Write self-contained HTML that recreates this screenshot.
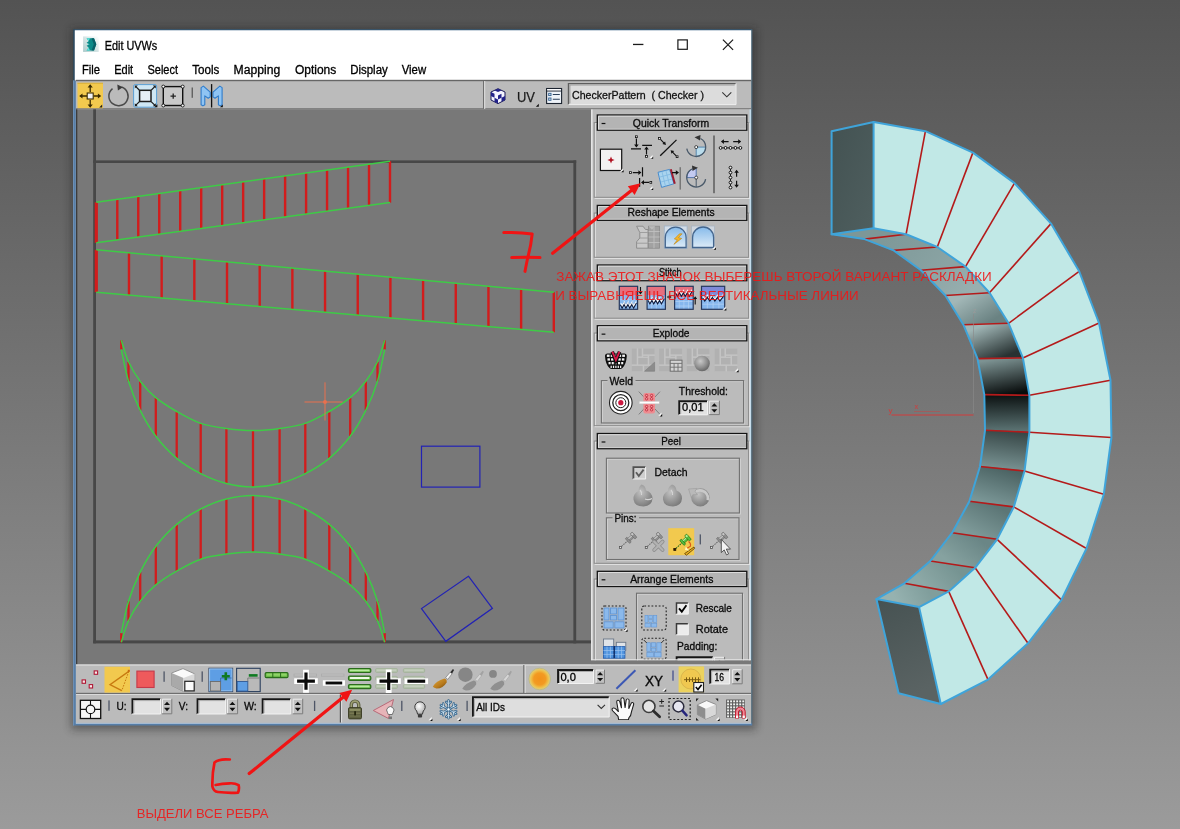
<!DOCTYPE html>
<html lang="ru">
<head>
<meta charset="utf-8">
<title>Edit UVWs</title>
<style>
html,body{margin:0;padding:0;background:#777;}
body{width:1180px;height:829px;overflow:hidden;font-family:"Liberation Sans", Arial, sans-serif;}
svg{display:block;will-change:transform;}
svg text{font-family:"Liberation Sans", Arial, sans-serif;white-space:pre;}
</style>
</head>
<body>
<svg width="1180" height="829" viewBox="0 0 1180 829">
<defs>
<linearGradient id="bg" x1="0" y1="0" x2="0" y2="1"><stop offset="0" stop-color="#535353"/><stop offset="1" stop-color="#9b9b9b"/></linearGradient>
<filter id="sh" x="-5%" y="-5%" width="110%" height="110%"><feGaussianBlur stdDeviation="4"/></filter>
<filter id="b1"><feGaussianBlur stdDeviation="0.45"/></filter>
</defs>
<rect x="0" y="0" width="1180" height="829" fill="url(#bg)"/>
<g id="arc3d">
<defs>
<linearGradient id="w0" gradientUnits="userSpaceOnUse" x1="852.6" y1="231.2" x2="885.35" y2="236.65"><stop offset="0" stop-color="#7d9797"/><stop offset="1" stop-color="#7d9797"/></linearGradient>
<linearGradient id="w1" gradientUnits="userSpaceOnUse" x1="885.35" y1="236.65" x2="915.45" y2="248.7"><stop offset="0" stop-color="#7f9999"/><stop offset="1" stop-color="#829c9c"/></linearGradient>
<linearGradient id="w2" gradientUnits="userSpaceOnUse" x1="915.45" y1="248.7" x2="943.25" y2="268.45"><stop offset="0" stop-color="#849e9e"/><stop offset="1" stop-color="#8aa3a3"/></linearGradient>
<linearGradient id="w3" gradientUnits="userSpaceOnUse" x1="943.25" y1="268.45" x2="967.45" y2="294.1"><stop offset="0" stop-color="#8ea6a6"/><stop offset="1" stop-color="#98afaf"/></linearGradient>
<linearGradient id="w4" gradientUnits="userSpaceOnUse" x1="967.45" y1="294.1" x2="986" y2="324"><stop offset="0" stop-color="#a2b7b7"/><stop offset="1" stop-color="#6a8282"/></linearGradient>
<linearGradient id="w5" gradientUnits="userSpaceOnUse" x1="986" y1="324" x2="1000.2" y2="358.25"><stop offset="0" stop-color="#a0b6b6"/><stop offset="1" stop-color="#283232"/></linearGradient>
<linearGradient id="w6" gradientUnits="userSpaceOnUse" x1="1000.2" y1="358.25" x2="1006.85" y2="394.95"><stop offset="0" stop-color="#7c9292"/><stop offset="1" stop-color="#080c0c"/></linearGradient>
<linearGradient id="w7" gradientUnits="userSpaceOnUse" x1="1006.85" y1="394.95" x2="1007.2" y2="431.25"><stop offset="0" stop-color="#0c1212"/><stop offset="1" stop-color="#5c7474"/></linearGradient>
<linearGradient id="w8" gradientUnits="userSpaceOnUse" x1="1007.2" y1="431.25" x2="1002.25" y2="468.75"><stop offset="0" stop-color="#384848"/><stop offset="1" stop-color="#789292"/></linearGradient>
<linearGradient id="w9" gradientUnits="userSpaceOnUse" x1="1002.25" y1="468.75" x2="991.6" y2="504.1"><stop offset="0" stop-color="#4c6464"/><stop offset="1" stop-color="#7a9696"/></linearGradient>
<linearGradient id="w10" gradientUnits="userSpaceOnUse" x1="991.6" y1="504.1" x2="974.65" y2="536"><stop offset="0" stop-color="#5c7676"/><stop offset="1" stop-color="#7e9a99"/></linearGradient>
<linearGradient id="w11" gradientUnits="userSpaceOnUse" x1="974.65" y1="536" x2="952.7" y2="564.4"><stop offset="0" stop-color="#6a8686"/><stop offset="1" stop-color="#86a2a0"/></linearGradient>
<linearGradient id="w12" gradientUnits="userSpaceOnUse" x1="952.7" y1="564.4" x2="926.55" y2="587.35"><stop offset="0" stop-color="#769492"/><stop offset="1" stop-color="#8ca8a6"/></linearGradient>
<linearGradient id="w13" gradientUnits="userSpaceOnUse" x1="926.55" y1="587.35" x2="897.75" y2="603.1"><stop offset="0" stop-color="#809e9c"/><stop offset="1" stop-color="#96b2b0"/></linearGradient>
<linearGradient id="capt" x1="0" y1="0" x2="1" y2="1"><stop offset="0" stop-color="#435252"/><stop offset="1" stop-color="#4f5f5f"/></linearGradient>
<linearGradient id="capb" x1="0" y1="0" x2="0.3" y2="1"><stop offset="0" stop-color="#465252"/><stop offset="1" stop-color="#5a6363"/></linearGradient>
</defs>
<polygon points="873.6,228.2 906.1,234.2 864.6,239.1 831.6,234.2" fill="url(#w0)" stroke="url(#w0)" stroke-width="0.6"/>
<polygon points="906.1,234.2 937.3,247 893.6,250.4 864.6,239.1" fill="url(#w1)" stroke="url(#w1)" stroke-width="0.6"/>
<polygon points="937.3,247 965.5,266.6 921,270.3 893.6,250.4" fill="url(#w2)" stroke="url(#w2)" stroke-width="0.6"/>
<polygon points="965.5,266.6 989.5,292.7 945.4,295.5 921,270.3" fill="url(#w3)" stroke="url(#w3)" stroke-width="0.6"/>
<polygon points="989.5,292.7 1008.6,323.3 963.4,324.7 945.4,295.5" fill="url(#w4)" stroke="url(#w4)" stroke-width="0.6"/>
<polygon points="1008.6,323.3 1022.9,357.9 977.5,358.6 963.4,324.7" fill="url(#w5)" stroke="url(#w5)" stroke-width="0.6"/>
<polygon points="1022.9,357.9 1029.4,395.3 984.3,394.6 977.5,358.6" fill="url(#w6)" stroke="url(#w6)" stroke-width="0.6"/>
<polygon points="1029.4,395.3 1029.4,432.2 985,430.3 984.3,394.6" fill="url(#w7)" stroke="url(#w7)" stroke-width="0.6"/>
<polygon points="1029.4,432.2 1024.5,471 980,466.5 985,430.3" fill="url(#w8)" stroke="url(#w8)" stroke-width="0.6"/>
<polygon points="1024.5,471 1013.8,506.9 969.4,501.3 980,466.5" fill="url(#w9)" stroke="url(#w9)" stroke-width="0.6"/>
<polygon points="1013.8,506.9 997.1,539.3 952.2,532.7 969.4,501.3" fill="url(#w10)" stroke="url(#w10)" stroke-width="0.6"/>
<polygon points="997.1,539.3 975.1,567.8 930.3,561 952.2,532.7" fill="url(#w11)" stroke="url(#w11)" stroke-width="0.6"/>
<polygon points="975.1,567.8 948.7,591.4 904.4,583.3 930.3,561" fill="url(#w12)" stroke="url(#w12)" stroke-width="0.6"/>
<polygon points="948.7,591.4 919.1,607.1 876.4,599.1 904.4,583.3" fill="url(#w13)" stroke="url(#w13)" stroke-width="0.6"/>
<polygon points="873.6,122.1 925.4,131.2 972.9,152.6 1014.5,183.1 1051,223.6 1079.2,271.3 1099,323 1110.5,380.3 1111.4,437.5 1103.8,494.3 1086.5,548.5 1061.5,599.8 1028,643.3 988,679.6 940.8,704 919.1,607.1 948.7,591.4 975.1,567.8 997.1,539.3 1013.8,506.9 1024.5,471 1029.4,432.2 1029.4,395.3 1022.9,357.9 1008.6,323.3 989.5,292.7 965.5,266.6 937.3,247 906.1,234.2 873.6,228.2" fill="#c1e8e6"/>
<polygon points="831.6,131.2 873.6,122.1 873.6,228.2 831.6,234.2" fill="url(#capt)"/>
<polygon points="876.4,599.1 919.1,607.1 940.8,704 898.6,693.2" fill="url(#capb)"/>
<line x1="925.4" y1="131.2" x2="906.1" y2="234.2" stroke="#b41a1a" stroke-width="1.600"/>
<line x1="906.1" y1="234.2" x2="864.6" y2="239.1" stroke="#b41a1a" stroke-width="1.600"/>
<line x1="972.9" y1="152.6" x2="937.3" y2="247" stroke="#b41a1a" stroke-width="1.600"/>
<line x1="937.3" y1="247" x2="893.6" y2="250.4" stroke="#b41a1a" stroke-width="1.600"/>
<line x1="1014.5" y1="183.1" x2="965.5" y2="266.6" stroke="#b41a1a" stroke-width="1.600"/>
<line x1="965.5" y1="266.6" x2="921" y2="270.3" stroke="#b41a1a" stroke-width="1.600"/>
<line x1="1051" y1="223.6" x2="989.5" y2="292.7" stroke="#b41a1a" stroke-width="1.600"/>
<line x1="989.5" y1="292.7" x2="945.4" y2="295.5" stroke="#b41a1a" stroke-width="1.600"/>
<line x1="1079.2" y1="271.3" x2="1008.6" y2="323.3" stroke="#b41a1a" stroke-width="1.600"/>
<line x1="1008.6" y1="323.3" x2="963.4" y2="324.7" stroke="#b41a1a" stroke-width="1.600"/>
<line x1="1099" y1="323" x2="1022.9" y2="357.9" stroke="#b41a1a" stroke-width="1.600"/>
<line x1="1022.9" y1="357.9" x2="977.5" y2="358.6" stroke="#b41a1a" stroke-width="1.600"/>
<line x1="1110.5" y1="380.3" x2="1029.4" y2="395.3" stroke="#b41a1a" stroke-width="1.600"/>
<line x1="1029.4" y1="395.3" x2="984.3" y2="394.6" stroke="#b41a1a" stroke-width="1.600"/>
<line x1="1111.4" y1="437.5" x2="1029.4" y2="432.2" stroke="#b41a1a" stroke-width="1.600"/>
<line x1="1029.4" y1="432.2" x2="985" y2="430.3" stroke="#b41a1a" stroke-width="1.600"/>
<line x1="1103.8" y1="494.3" x2="1024.5" y2="471" stroke="#b41a1a" stroke-width="1.600"/>
<line x1="1024.5" y1="471" x2="980" y2="466.5" stroke="#b41a1a" stroke-width="1.600"/>
<line x1="1086.5" y1="548.5" x2="1013.8" y2="506.9" stroke="#b41a1a" stroke-width="1.600"/>
<line x1="1013.8" y1="506.9" x2="969.4" y2="501.3" stroke="#b41a1a" stroke-width="1.600"/>
<line x1="1061.5" y1="599.8" x2="997.1" y2="539.3" stroke="#b41a1a" stroke-width="1.600"/>
<line x1="997.1" y1="539.3" x2="952.2" y2="532.7" stroke="#b41a1a" stroke-width="1.600"/>
<line x1="1028" y1="643.3" x2="975.1" y2="567.8" stroke="#b41a1a" stroke-width="1.600"/>
<line x1="975.1" y1="567.8" x2="930.3" y2="561" stroke="#b41a1a" stroke-width="1.600"/>
<line x1="988" y1="679.6" x2="948.7" y2="591.4" stroke="#b41a1a" stroke-width="1.600"/>
<line x1="948.7" y1="591.4" x2="904.4" y2="583.3" stroke="#b41a1a" stroke-width="1.600"/>
<polyline points="873.6,122.1 925.4,131.2 972.9,152.6 1014.5,183.1 1051,223.6 1079.2,271.3 1099,323 1110.5,380.3 1111.4,437.5 1103.8,494.3 1086.5,548.5 1061.5,599.8 1028,643.3 988,679.6 940.8,704" fill="none" stroke="#3fa4da" stroke-width="2" stroke-linejoin="round" stroke-linecap="round"/>
<polyline points="873.6,228.2 906.1,234.2 937.3,247 965.5,266.6 989.5,292.7 1008.6,323.3 1022.9,357.9 1029.4,395.3 1029.4,432.2 1024.5,471 1013.8,506.9 997.1,539.3 975.1,567.8 948.7,591.4 919.1,607.1" fill="none" stroke="#3fa4da" stroke-width="2" stroke-linejoin="round" stroke-linecap="round"/>
<polyline points="831.6,234.2 864.6,239.1 893.6,250.4 921,270.3 945.4,295.5 963.4,324.7 977.5,358.6 984.3,394.6 985,430.3 980,466.5 969.4,501.3 952.2,532.7 930.3,561 904.4,583.3 876.4,599.1" fill="none" stroke="#3fa4da" stroke-width="2" stroke-linejoin="round" stroke-linecap="round"/>
<polygon points="831.6,131.2 873.6,122.1 873.6,228.2 831.6,234.2" fill="none" stroke="#3fa4da" stroke-width="2" stroke-linejoin="round" stroke-linecap="round"/>
<polygon points="876.4,599.1 919.1,607.1 940.8,704 898.6,693.2" fill="none" stroke="#3fa4da" stroke-width="2" stroke-linejoin="round" stroke-linecap="round"/>
<line x1="973.5" y1="314" x2="973.5" y2="413" stroke="#8a8a8a" stroke-width="0.8" opacity="0.8"/>
<line x1="891.5" y1="415" x2="973.5" y2="415" stroke="#d23c3c" stroke-width="1"/>
<line x1="914" y1="411.6" x2="940" y2="411.6" stroke="#d23c3c" stroke-width="0.7" opacity="0.7"/>
<text x="888.5" y="412.5" font-size="8" fill="#d23c3c">y</text>
<text x="914.5" y="409" font-size="7.5" fill="#d23c3c">x</text>
<text x="973" y="312.5" font-size="7" fill="#9a9a9a">z</text>
</g>
<g id="window">
<rect x="71" y="28" width="685" height="702" fill="#1c1c1c" opacity="0.420" filter="url(#sh)"/>
<rect x="73" y="29.300" width="679.2" height="696.2" fill="#567ea8"/>
<rect x="73" y="29.300" width="679.2" height="1" fill="#2f4c5e"/>
<rect x="751.2" y="29.300" width="1" height="694" fill="#4a626c"/>
<rect x="73" y="29.300" width="1.800" height="51.200" fill="#30495a"/>
<rect x="73" y="80.500" width="1" height="645" fill="#6d8fb4"/>
<rect x="75.800" y="722.500" width="675.400" height="1" fill="#f2f6fa"/>
<rect x="74.800" y="30.300" width="676.400" height="50.200" fill="#ffffff"/>
<rect x="75.800" y="80.5" width="675.400" height="642" fill="#bbbbbb"/>
<g id="appicon">
<defs><linearGradient id="aig" x1="1" y1="0" x2="0" y2="1"><stop offset="0" stop-color="#ffffff"/><stop offset="1" stop-color="#a9c9c9"/></linearGradient></defs>
<rect x="83.100" y="36.400" width="15.600" height="15.500" fill="url(#aig)"/>
<path d="M86.600 38.200 H94 L96.300 44.300 L94 50.400 H86.600 L88.600 47.400 L86.600 45.800 L88.800 44.300 L86.600 42.800 L88.600 41.200 Z" fill="#0c8a88"/>
<path d="M91.500 38.200 H94 L96.300 44.300 L94 50.400 H91.500 L93.800 44.300 Z" fill="#086068"/>
<path d="M86.600 38.200 H90 L88.600 41.200 Z M86.600 42.800 L89.600 44.300 L86.600 45.800 L88.800 44.300z M88.600 47.400 L90 50.400 H86.600z" fill="#5fe6de"/>
</g>
<text x="104.8" y="49.6" font-size="12.5" fill="#000" textLength="52.5" lengthAdjust="spacingAndGlyphs"  stroke="#000" stroke-width="0.3">Edit UVWs</text>
<rect x="633" y="43.8" width="10.4" height="1.3" fill="#1a1a1a"/>
<rect x="677.9" y="39.9" width="9.4" height="9.4" fill="none" stroke="#1a1a1a" stroke-width="1.2"/>
<path d="M722.9 39.6 L733.1 49.8 M733.1 39.6 L722.9 49.8" stroke="#1a1a1a" stroke-width="1.2" fill="none"/>
<text x="82" y="73.7" font-size="12" fill="#000" textLength="18" lengthAdjust="spacingAndGlyphs"  stroke="#000" stroke-width="0.3">File</text>
<text x="114.2" y="73.7" font-size="12" fill="#000" textLength="19" lengthAdjust="spacingAndGlyphs"  stroke="#000" stroke-width="0.3">Edit</text>
<text x="147.5" y="73.7" font-size="12" fill="#000" textLength="30.5" lengthAdjust="spacingAndGlyphs"  stroke="#000" stroke-width="0.3">Select</text>
<text x="192.2" y="73.7" font-size="12" fill="#000" textLength="27.1" lengthAdjust="spacingAndGlyphs"  stroke="#000" stroke-width="0.3">Tools</text>
<text x="233.6" y="73.7" font-size="12" fill="#000" textLength="46.7" lengthAdjust="spacingAndGlyphs"  stroke="#000" stroke-width="0.3">Mapping</text>
<text x="294.9" y="73.7" font-size="12" fill="#000" textLength="41.4" lengthAdjust="spacingAndGlyphs"  stroke="#000" stroke-width="0.3">Options</text>
<text x="350.2" y="73.7" font-size="12" fill="#000" textLength="37.6" lengthAdjust="spacingAndGlyphs"  stroke="#000" stroke-width="0.3">Display</text>
<text x="401.7" y="73.7" font-size="12" fill="#000" textLength="24.4" lengthAdjust="spacingAndGlyphs"  stroke="#000" stroke-width="0.3">View</text>
<rect x="75.800" y="79.800" width="675.400" height="1.400" fill="#666666"/>
<rect x="76" y="108.3" width="675" height="1" fill="#6a6a6a"/>
<rect x="483" y="81" width="1.2" height="28" fill="#707070"/>
<rect x="484.2" y="81" width="1" height="28" fill="#e2e2e2"/>
<rect x="77.5" y="82.8" width="25.5" height="25.4" fill="#f2c94e"/>
<rect x="77.5" y="82.8" width="25.5" height="1" fill="#d9b03a"/>
<g stroke="#3a2a00" stroke-width="1.3" fill="none">
<path d="M90.2 85.5 V92 M90.2 100 V106.5 M80.5 96 H87 M93.5 96 H100"/>
</g>
<g fill="#3a2a00">
<path d="M90.2 84.2 l2.6 3.3 h-5.2z M90.2 107.8 l2.6 -3.3 h-5.2z M79.2 96 l3.3 -2.6 v5.2z M101.2 96 l-3.3 -2.6 v5.2z"/>
</g>
<rect x="87.2" y="93" width="6" height="6" fill="#f4f4f4" stroke="#3a2a00" stroke-width="1.1"/>
<path d="M102.2 104.5 v3 h-3z" fill="#222"/>
<path d="M121.5 87 A9.6 9.6 0 1 1 112.5 88.6" fill="none" stroke="#4a4a4a" stroke-width="1.5"/>
<path d="M117.3 84.6 l5.6 2.6 l-5 3.3 z" fill="#3a3a3a"/>
<rect x="133.6" y="84.6" width="23" height="22.6" rx="1.5" fill="#cfe7f4" stroke="#5b9fd4" stroke-width="1"/>
<rect x="139.6" y="90.3" width="11.4" height="11.2" fill="#e6eef6" stroke="#1c1c1c" stroke-width="1.5"/>
<path d="M139.2 90 L135.6 86.4 M151.4 90 L155 86.4 M139.2 101.8 L135.6 105.4 M151.4 101.8 L155 105.4" stroke="#1c1c1c" stroke-width="1.2"/>
<path d="M134.8 85.6 h3 l-3 3z M155.8 85.6 h-3 l3 3z M134.8 106.2 h3 l-3 -3z M155.8 106.2 h-3 l3 -3z" fill="#1c1c1c"/>
<path d="M157.4 104.2 v3 h-3z" fill="#111"/>
<rect x="163.3" y="86.6" width="19.4" height="18.9" fill="#c9c9c9" stroke="#111" stroke-width="1.4"/>
<circle cx="163.3" cy="86.6" r="1.5" fill="#fff" stroke="#111" stroke-width="0.9"/>
<circle cx="182.7" cy="86.6" r="1.5" fill="#fff" stroke="#111" stroke-width="0.9"/>
<circle cx="163.3" cy="105.5" r="1.5" fill="#fff" stroke="#111" stroke-width="0.9"/>
<circle cx="182.7" cy="105.5" r="1.5" fill="#fff" stroke="#111" stroke-width="0.9"/>
<path d="M170.5 96.1 h5.4 M173.2 93.4 v5.4" stroke="#222" stroke-width="1.3"/>
<rect x="191.6" y="87.5" width="1.3" height="10.3" fill="#5a5a5a"/>
<polygon points="201.1,87.6 203.4,86.1 210.2,92.2 210.2,96.9 208.2,98.3 204.8,95.9 204.8,104.7 202.9,105.9 201.1,104.7" fill="#8fc4f3" stroke="#2f7ccb" stroke-width="1.1" stroke-linejoin="round"/>
<polygon points="222.1,87.6 219.8,86.1 213,92.2 213,96.9 215,98.3 218.4,95.9 218.4,104.7 220.3,105.9 222.1,104.7" fill="#8fc4f3" stroke="#2f7ccb" stroke-width="1.1" stroke-linejoin="round"/>
<rect x="210.95" y="84.1" width="1.300" height="23.4" fill="#111"/>
<path d="M222.8 104.4 v2.800 h-2.800z" fill="#111"/>
<g id="globe">
<path d="M491 92 l7 -3.3 l7 3.3 v8 l-7 3.6 l-7 -3.6z" fill="#f4f4ff" stroke="#1a1a5a" stroke-width="1"/>
<path d="M491 92 l3.5 1.8 v4 l-3.5 -1.8z M494.5 97.8 l3.5 1.8 v4 l-3.5 -1.8z M498 95.6 l3.5 -1.8 v4 l-3.5 1.8z M501.500 97.8 l3.5 -1.8 v4 l-3.5 1.8z M494.5 90.400 l3.5 1.700 l3.5 -1.700 l-3.5 -1.700z" fill="#22228a"/>
</g>
<text x="517" y="102" font-size="15" fill="#1c1c1c" stroke="#1c1c1c" stroke-width="0.250" textLength="18" lengthAdjust="spacingAndGlyphs">UV</text>
<path d="M538.800 103.800 v3 h-3z" fill="#111"/>
<rect x="546.600" y="88.500" width="15" height="15" fill="#eef3f9" stroke="#1c2430" stroke-width="1.100"/>
<rect x="547.200" y="89.100" width="13.800" height="1.500" fill="#fdfdfd"/>
<rect x="546.600" y="90.600" width="15" height="0.900" fill="#1c2430"/>
<rect x="548.700" y="93.300" width="2.300" height="2.300" fill="#dfe8f2" stroke="#2f5f8f" stroke-width="0.900"/>
<rect x="548.700" y="98" width="2.300" height="2.300" fill="#dfe8f2" stroke="#2f5f8f" stroke-width="0.900"/>
<path d="M552.800 94.500 h7 M552.800 99.200 h7" stroke="#2a3f5a" stroke-width="1.100"/>
<rect x="568.5" y="83.6" width="167.3" height="20.8" fill="#dcdcdc"/>
<path d="M568.5 104.4 V83.6 H735.8" fill="none" stroke="#5e5e5e" stroke-width="1.4"/>
<path d="M569.9 103.4 V85 H734.6" fill="none" stroke="#9a9a9a" stroke-width="1"/>
<path d="M568.5 104.6 H736 V83.6" fill="none" stroke="#efefef" stroke-width="1"/>
<text x="572" y="98.8" font-size="11.5" fill="#111" textLength="132" lengthAdjust="spacingAndGlyphs"  stroke="#111" stroke-width="0.3">CheckerPattern  ( Checker )</text>
<path d="M722.3 92.400 l4.5 4.4 l4.5 -4.4" fill="none" stroke="#333" stroke-width="1.1"/>
</g>
<g id="viewport">
<rect x="76" y="109.300" width="515.5" height="555" fill="#787878"/>
<rect x="591" y="660" width="160" height="4.6" fill="#787878"/>
<rect x="76" y="109.3" width="1.3" height="555" fill="#3c3c3c"/>
<rect x="93.2" y="109.3" width="2.8" height="534" fill="#474747"/>
<rect x="93.2" y="160.4" width="483" height="2.600" fill="#474747"/>
<rect x="573.4" y="160.4" width="2.8" height="483" fill="#474747"/>
<rect x="93.2" y="640.4" width="498" height="3" fill="#474747"/>
<line x1="96.3" y1="202.3" x2="96.3" y2="242.8" stroke="#d21c1c" stroke-width="3.2"/>
<line x1="117.28" y1="199.36" x2="117.28" y2="239.93" stroke="#d21c1c" stroke-width="2.4"/>
<line x1="138.26" y1="196.43" x2="138.26" y2="237.06" stroke="#d21c1c" stroke-width="2.4"/>
<line x1="159.24" y1="193.49" x2="159.24" y2="234.19" stroke="#d21c1c" stroke-width="2.4"/>
<line x1="180.21" y1="190.56" x2="180.21" y2="231.31" stroke="#d21c1c" stroke-width="2.4"/>
<line x1="201.19" y1="187.62" x2="201.19" y2="228.44" stroke="#d21c1c" stroke-width="2.4"/>
<line x1="222.17" y1="184.69" x2="222.17" y2="225.57" stroke="#d21c1c" stroke-width="2.4"/>
<line x1="243.15" y1="181.75" x2="243.15" y2="222.7" stroke="#d21c1c" stroke-width="2.4"/>
<line x1="264.13" y1="178.81" x2="264.13" y2="219.83" stroke="#d21c1c" stroke-width="2.4"/>
<line x1="285.11" y1="175.88" x2="285.11" y2="216.96" stroke="#d21c1c" stroke-width="2.4"/>
<line x1="306.09" y1="172.94" x2="306.09" y2="214.09" stroke="#d21c1c" stroke-width="2.4"/>
<line x1="327.06" y1="170.01" x2="327.06" y2="211.21" stroke="#d21c1c" stroke-width="2.4"/>
<line x1="348.04" y1="167.07" x2="348.04" y2="208.34" stroke="#d21c1c" stroke-width="2.4"/>
<line x1="369.02" y1="164.14" x2="369.02" y2="205.47" stroke="#d21c1c" stroke-width="2.4"/>
<line x1="390" y1="161.2" x2="390" y2="202.6" stroke="#d21c1c" stroke-width="2.4"/>
<path d="M96.3,202.3 L390,161.2 M96.3,242.8 L390,202.6" stroke="#3ecb46" stroke-width="1.500" fill="none"/>
<line x1="96.3" y1="249.8" x2="96.3" y2="292.2" stroke="#d21c1c" stroke-width="3.2"/>
<line x1="128.98" y1="252.83" x2="128.98" y2="295.06" stroke="#d21c1c" stroke-width="2.4"/>
<line x1="161.66" y1="255.86" x2="161.66" y2="297.93" stroke="#d21c1c" stroke-width="2.4"/>
<line x1="194.34" y1="258.89" x2="194.34" y2="300.79" stroke="#d21c1c" stroke-width="2.4"/>
<line x1="227.01" y1="261.91" x2="227.01" y2="303.66" stroke="#d21c1c" stroke-width="2.4"/>
<line x1="259.69" y1="264.94" x2="259.69" y2="306.52" stroke="#d21c1c" stroke-width="2.4"/>
<line x1="292.37" y1="267.97" x2="292.37" y2="309.39" stroke="#d21c1c" stroke-width="2.4"/>
<line x1="325.05" y1="271" x2="325.05" y2="312.25" stroke="#d21c1c" stroke-width="2.4"/>
<line x1="357.73" y1="274.03" x2="357.73" y2="315.11" stroke="#d21c1c" stroke-width="2.4"/>
<line x1="390.41" y1="277.06" x2="390.41" y2="317.98" stroke="#d21c1c" stroke-width="2.4"/>
<line x1="423.09" y1="280.09" x2="423.09" y2="320.84" stroke="#d21c1c" stroke-width="2.4"/>
<line x1="455.76" y1="283.11" x2="455.76" y2="323.71" stroke="#d21c1c" stroke-width="2.4"/>
<line x1="488.44" y1="286.14" x2="488.44" y2="326.57" stroke="#d21c1c" stroke-width="2.4"/>
<line x1="521.12" y1="289.17" x2="521.12" y2="329.44" stroke="#d21c1c" stroke-width="2.4"/>
<line x1="553.8" y1="292.2" x2="553.8" y2="332.3" stroke="#d21c1c" stroke-width="2.4"/>
<path d="M96.3,249.8 L553.8,292.2 M96.3,292.2 L553.8,332.3" stroke="#3ecb46" stroke-width="1.500" fill="none"/>
<line x1="121.3" y1="340.3" x2="121.3" y2="349.5" stroke="#d21c1c" stroke-width="2.300"/>
<line x1="128.5" y1="361.8" x2="128.5" y2="381.3" stroke="#d21c1c" stroke-width="2.300"/>
<line x1="140.2" y1="381.3" x2="140.2" y2="410.4" stroke="#d21c1c" stroke-width="2.300"/>
<line x1="155.8" y1="397.7" x2="155.8" y2="436.3" stroke="#d21c1c" stroke-width="2.300"/>
<line x1="176.7" y1="411.5" x2="176.7" y2="458.3" stroke="#d21c1c" stroke-width="2.300"/>
<line x1="200.7" y1="423.4" x2="200.7" y2="473.6" stroke="#d21c1c" stroke-width="2.300"/>
<line x1="226.4" y1="428.5" x2="226.4" y2="483.5" stroke="#d21c1c" stroke-width="2.300"/>
<line x1="253" y1="430.6" x2="253" y2="487" stroke="#d21c1c" stroke-width="2.300"/>
<line x1="279.6" y1="428.5" x2="279.6" y2="483.5" stroke="#d21c1c" stroke-width="2.300"/>
<line x1="305.3" y1="423.4" x2="305.3" y2="473.6" stroke="#d21c1c" stroke-width="2.300"/>
<line x1="329.3" y1="411.5" x2="329.3" y2="458.3" stroke="#d21c1c" stroke-width="2.300"/>
<line x1="350.2" y1="397.7" x2="350.2" y2="436.3" stroke="#d21c1c" stroke-width="2.300"/>
<line x1="365.8" y1="381.3" x2="365.8" y2="410.4" stroke="#d21c1c" stroke-width="2.300"/>
<line x1="377.5" y1="361.8" x2="377.5" y2="381.3" stroke="#d21c1c" stroke-width="2.300"/>
<line x1="384.7" y1="340.3" x2="384.7" y2="349.5" stroke="#d21c1c" stroke-width="2.300"/>
<path d="M121.3 340.3 C122.5 343.88 125.35 354.97 128.5 361.8 C131.65 368.63 135.65 375.32 140.2 381.3 C144.75 387.28 149.72 392.67 155.8 397.7 C161.88 402.73 169.22 407.22 176.7 411.5 C184.18 415.78 192.42 420.57 200.7 423.4 C208.98 426.23 217.68 427.3 226.4 428.5 C235.12 429.7 244.13 430.6 253 430.6 C261.87 430.6 270.88 429.7 279.6 428.5 C288.32 427.3 297.02 426.23 305.3 423.4 C313.58 420.57 321.82 415.78 329.3 411.5 C336.78 407.22 344.12 402.73 350.2 397.7 C356.28 392.67 361.25 387.28 365.8 381.3 C370.35 375.32 374.35 368.63 377.5 361.8 C380.65 354.97 383.5 343.88 384.7 340.3" fill="none" stroke="#3ecb46" stroke-width="1.500"/>
<path d="M121.3 349.5 C122.5 354.8 125.35 371.15 128.5 381.3 C131.65 391.45 135.65 401.23 140.2 410.4 C144.75 419.57 149.72 428.32 155.8 436.3 C161.88 444.28 169.22 452.08 176.7 458.3 C184.18 464.52 192.42 469.4 200.7 473.6 C208.98 477.8 217.68 481.27 226.4 483.5 C235.12 485.73 244.13 487 253 487 C261.87 487 270.88 485.73 279.6 483.5 C288.32 481.27 297.02 477.8 305.3 473.6 C313.58 469.4 321.82 464.52 329.3 458.3 C336.78 452.08 344.12 444.28 350.2 436.3 C356.28 428.32 361.25 419.57 365.8 410.4 C370.35 401.23 374.35 391.45 377.5 381.3 C380.65 371.15 383.5 354.8 384.7 349.5" fill="none" stroke="#3ecb46" stroke-width="1.500"/>
<line x1="121.3" y1="642.3" x2="121.3" y2="633.1" stroke="#d21c1c" stroke-width="2.300"/>
<line x1="128.5" y1="620.8" x2="128.5" y2="601.3" stroke="#d21c1c" stroke-width="2.300"/>
<line x1="140.2" y1="601.3" x2="140.2" y2="572.2" stroke="#d21c1c" stroke-width="2.300"/>
<line x1="155.8" y1="584.9" x2="155.8" y2="546.3" stroke="#d21c1c" stroke-width="2.300"/>
<line x1="176.7" y1="571.1" x2="176.7" y2="524.3" stroke="#d21c1c" stroke-width="2.300"/>
<line x1="200.7" y1="559.2" x2="200.7" y2="509" stroke="#d21c1c" stroke-width="2.300"/>
<line x1="226.4" y1="554.1" x2="226.4" y2="499.1" stroke="#d21c1c" stroke-width="2.300"/>
<line x1="253" y1="552" x2="253" y2="495.6" stroke="#d21c1c" stroke-width="2.300"/>
<line x1="279.6" y1="554.1" x2="279.6" y2="499.1" stroke="#d21c1c" stroke-width="2.300"/>
<line x1="305.3" y1="559.2" x2="305.3" y2="509" stroke="#d21c1c" stroke-width="2.300"/>
<line x1="329.3" y1="571.1" x2="329.3" y2="524.3" stroke="#d21c1c" stroke-width="2.300"/>
<line x1="350.2" y1="584.9" x2="350.2" y2="546.3" stroke="#d21c1c" stroke-width="2.300"/>
<line x1="365.8" y1="601.3" x2="365.8" y2="572.2" stroke="#d21c1c" stroke-width="2.300"/>
<line x1="377.5" y1="620.8" x2="377.5" y2="601.3" stroke="#d21c1c" stroke-width="2.300"/>
<line x1="384.7" y1="642.3" x2="384.7" y2="633.1" stroke="#d21c1c" stroke-width="2.300"/>
<path d="M121.3 642.3 C122.5 638.72 125.35 627.63 128.5 620.8 C131.65 613.97 135.65 607.28 140.2 601.3 C144.75 595.32 149.72 589.93 155.8 584.9 C161.88 579.87 169.22 575.38 176.7 571.1 C184.18 566.82 192.42 562.03 200.7 559.2 C208.98 556.37 217.68 555.3 226.4 554.1 C235.12 552.9 244.13 552 253 552 C261.87 552 270.88 552.9 279.6 554.1 C288.32 555.3 297.02 556.37 305.3 559.2 C313.58 562.03 321.82 566.82 329.3 571.1 C336.78 575.38 344.12 579.87 350.2 584.9 C356.28 589.93 361.25 595.32 365.8 601.3 C370.35 607.28 374.35 613.97 377.5 620.8 C380.65 627.63 383.5 638.72 384.7 642.3" fill="none" stroke="#3ecb46" stroke-width="1.500"/>
<path d="M121.3 633.1 C122.5 627.8 125.35 611.45 128.5 601.3 C131.65 591.15 135.65 581.37 140.2 572.2 C144.75 563.03 149.72 554.28 155.8 546.3 C161.88 538.32 169.22 530.52 176.7 524.3 C184.18 518.08 192.42 513.2 200.7 509 C208.98 504.8 217.68 501.33 226.4 499.1 C235.12 496.87 244.13 495.6 253 495.6 C261.87 495.6 270.88 496.87 279.6 499.1 C288.32 501.33 297.02 504.8 305.3 509 C313.58 513.2 321.82 518.08 329.3 524.3 C336.78 530.52 344.12 538.32 350.2 546.3 C356.28 554.28 361.25 563.03 365.8 572.2 C370.35 581.37 374.35 591.15 377.5 601.3 C380.65 611.45 383.5 627.8 384.7 633.1" fill="none" stroke="#3ecb46" stroke-width="1.500"/>
<rect x="421.5" y="446.2" width="58.4" height="40.9" fill="none" stroke="#2222b4" stroke-width="1.2"/>
<polygon points="468.4,576.2 492.4,608.3 445.8,641.3 421.5,608.6" fill="none" stroke="#2222b4" stroke-width="1.2"/>
<path d="M304.5 402 H342.5 M325 382.300 V420.5" stroke="#e8704e" stroke-width="1" fill="none"/>
<circle cx="325" cy="402" r="2" fill="#e8704e"/>
</g>
<g id="panel">
<clipPath id="pclip"><rect x="591" y="109.300" width="160" height="550.9"/></clipPath>
<g clip-path="url(#pclip)">
<rect x="591" y="109.3" width="160" height="551" fill="#bbbbbb"/>
<rect x="591" y="109.3" width="1.6" height="551" fill="#e4e4e4"/>
<rect x="749.500" y="109.3" width="1.700" height="551" fill="#c2dbea"/>
<rect x="595.2" y="123.6" width="154.4" height="74.7" fill="none" stroke="#e9e9e9" stroke-width="1"/>
<rect x="594.2" y="122.6" width="154.4" height="74.7" fill="none" stroke="#8b8b8b" stroke-width="1"/>
<rect x="597.3" y="115" width="149.5" height="15.2" fill="#b4b4b4" stroke="#141414" stroke-width="1.3"/>
<path d="M598.500 129.2 V116.2 H746" fill="none" stroke="#dcdcdc" stroke-width="1"/>
<path d="M598 129.1 H746" fill="none" stroke="#d4d4d4" stroke-width="0.800"/>
<text x="632.8" y="126.9" font-size="11" fill="#0a0a0a" textLength="76.4" lengthAdjust="spacingAndGlyphs"  stroke="#0a0a0a" stroke-width="0.3">Quick Transform</text>
<rect x="601.6" y="122.9" width="3.8" height="1.2" fill="#111"/>
<rect x="600.4" y="149.2" width="21.3" height="21.3" fill="#f3f1f1" stroke="#111" stroke-width="1.2"/>
<path d="M611 156.4 l1 2.600 l2.600 1 l-2.600 1 l-1 2.600 l-1 -2.600 l-2.600 -1 l2.600 -1z" fill="#b01020"/>
<path d="M622.9 168.4 v3.2 h-3.2 z" fill="#f8f8f8"/>
<path d="M623.6 170 v2.3 h-2.3 z" fill="#0a0a0a"/>
<g stroke="#111" fill="none" stroke-width="1.2">
<rect x="635.5" y="135.8" width="1.800" height="1.800" fill="#fff" stroke-width="0.8"/>
<path d="M636.4 138.6 V146.2 M631 148.9 H641 M642.2 145.300 H652 M646.5 154.5 V148"/>
<rect x="645.6" y="155.5" width="1.800" height="1.800" fill="#fff" stroke-width="0.8"/>
</g>
<path d="M636.4 147.6 l-2.300 -3 h4.600z M646.5 146.6 l-2.300 3 h4.600z" fill="#111"/>
<path d="M652.5 155.1 v3 h-3 z" fill="#f8f8f8"/>
<path d="M653.2 156.7 v2.1 h-2.1 z" fill="#0a0a0a"/>
<g stroke="#111" fill="none" stroke-width="1.3">
<path d="M660.2 155.7 L676.5 139.9"/>
<path d="M660.5 139.4 L664.600 143.6 M676.2 155.8 L672 151.6" stroke-width="1.1"/>
<rect x="658.6" y="137.5" width="1.800" height="1.800" fill="#fff" stroke-width="0.8"/>
<rect x="676.2" y="155.8" width="1.800" height="1.800" fill="#fff" stroke-width="0.8"/>
</g>
<path d="M666 145 l-3.600 -0.900 l2.700 -2.700z M670.6 150.2 l3.600 0.900 l-2.700 2.700z" fill="#111"/>
<path d="M696.2 147.1 V156.6 A9.5 9.5 0 0 0 705.7 147.100z" fill="#b9dcec" stroke="#4b7ea8" stroke-width="0.9"/>
<path d="M686.8 148.6 A9.5 9.5 0 1 0 700.5 138.5" fill="none" stroke="#4a5a6a" stroke-width="1.3"/>
<path d="M694.5 137.200 l6 -2.200 l-0.500 5.600z" fill="#333"/>
<circle cx="696.2" cy="147.1" r="1.500" fill="#fff" stroke="#222" stroke-width="0.8"/>
<rect x="713.3" y="135.5" width="1.4" height="57.7" fill="#555"/>
<path d="M722.5 141.600 H728.6 M733.2 141.600 H739.6" stroke="#111" stroke-width="1.2"/>
<path d="M720.9 141.600 l3 -2.300 v4.600z M741.2 141.600 l-3 -2.300 v4.600z" fill="#111"/>
<path d="M720.600 147.900 H740.400" stroke="#111" stroke-width="0.900"/>
<circle cx="720.6" cy="147.9" r="1.400" fill="#f4f4f4" stroke="#111" stroke-width="1"/>
<circle cx="725.55" cy="147.9" r="1.400" fill="#f4f4f4" stroke="#111" stroke-width="1"/>
<circle cx="730.5" cy="147.9" r="1.400" fill="#f4f4f4" stroke="#111" stroke-width="1"/>
<circle cx="735.45" cy="147.9" r="1.400" fill="#f4f4f4" stroke="#111" stroke-width="1"/>
<circle cx="740.4" cy="147.9" r="1.400" fill="#f4f4f4" stroke="#111" stroke-width="1"/>
<g stroke="#111" fill="none" stroke-width="1.2">
<rect x="629.6" y="171.7" width="1.800" height="1.800" fill="#fff" stroke-width="0.8"/>
<path d="M632.8 172.6 H639.6 M642.5 167.2 V176.6 M639.6 178 V186.7 M649 182.4 H643.4"/>
<rect x="649.9" y="181.5" width="1.800" height="1.800" fill="#fff" stroke-width="0.8"/>
</g>
<path d="M641.4 172.6 l-3 -2.300 v4.600z M641 182.4 l3 -2.300 v4.600z" fill="#111"/>
<path d="M652.5 186.3 v3 h-3 z" fill="#f8f8f8"/>
<path d="M653.2 187.9 v2.1 h-2.1 z" fill="#0a0a0a"/>
<polygon points="658,172.3 669.6,169.4 673.9,183.8 661.6,187.4" fill="#a9d3ee" stroke="#4a8ccc" stroke-width="1"/>
<path d="M661.9 171.4 L665.5 186.3 M665.8 170.400 L669.600 185 M659.200 177.2 L671.2 174 M660.4 182.2 L672.6 178.9" stroke="#7ab4e0" stroke-width="0.7"/>
<path d="M670.8 169.2 L674.8 183.700" stroke="#a01c30" stroke-width="2"/>
<path d="M672 172.6 H676.5" stroke="#111" stroke-width="1.2"/>
<path d="M679 172.6 l-3.200 -2.400 v4.800z" fill="#111"/>
<rect x="679.600" y="167.2" width="1.200" height="22.4" fill="#666"/>
<path d="M696.2 177.6 V168.100 A9.5 9.5 0 0 0 686.7 177.600z" fill="#c3caf0" stroke="#4b6ea8" stroke-width="0.9"/>
<path d="M705.6 179.100 A9.5 9.5 0 1 1 692 169" fill="none" stroke="#4a5a6a" stroke-width="1.3"/>
<path d="M698 167.700 l-6 -2.200 l0.500 5.600z" fill="#333"/>
<path d="M696.2 177.600 V187 " stroke="#4a5a6a" stroke-width="1"/>
<circle cx="696.2" cy="177.6" r="1.500" fill="#fff" stroke="#222" stroke-width="0.8"/>
<path d="M730.500 167.600 V187.500" stroke="#111" stroke-width="0.900"/>
<circle cx="730.5" cy="167.6" r="1.400" fill="#f4f4f4" stroke="#111" stroke-width="1"/>
<circle cx="730.5" cy="172.58" r="1.400" fill="#f4f4f4" stroke="#111" stroke-width="1"/>
<circle cx="730.5" cy="177.56" r="1.400" fill="#f4f4f4" stroke="#111" stroke-width="1"/>
<circle cx="730.5" cy="182.54" r="1.400" fill="#f4f4f4" stroke="#111" stroke-width="1"/>
<circle cx="730.5" cy="187.52" r="1.400" fill="#f4f4f4" stroke="#111" stroke-width="1"/>
<path d="M736.6 171.600 V176.8 M736.6 180.7 V186" stroke="#111" stroke-width="1.2"/>
<path d="M736.6 169.800 l-2.300 3 h4.600z M736.6 187.800 l-2.300 -3 h4.600z" fill="#111"/>
<rect x="595.2" y="214" width="154.4" height="44.3" fill="none" stroke="#e9e9e9" stroke-width="1"/>
<rect x="594.2" y="213" width="154.4" height="44.3" fill="none" stroke="#8b8b8b" stroke-width="1"/>
<rect x="597.3" y="205.4" width="149.5" height="14.9" fill="#b4b4b4" stroke="#141414" stroke-width="1.3"/>
<path d="M598.500 219.3 V206.6 H746" fill="none" stroke="#dcdcdc" stroke-width="1"/>
<path d="M598 219.2 H746" fill="none" stroke="#d4d4d4" stroke-width="0.800"/>
<text x="627.6" y="216.4" font-size="11" fill="#0a0a0a" textLength="87" lengthAdjust="spacingAndGlyphs"  stroke="#0a0a0a" stroke-width="0.3">Reshape Elements</text>
<g id="reshape1">
<path d="M636.600 226.200 H643 L645.5 229.500 H648 V248.2 H636.600 V241.8 L639.800 238 V232.5 Z" fill="#c9c9c9" stroke="#8e8e8e" stroke-width="1"/>
<path d="M639.8 232.500 H648 M639.8 238 H648 M636.6 243.200 H648" stroke="#9a9a9a" stroke-width="0.9"/>
<rect x="648.6" y="226.2" width="11" height="22" fill="#a2a2a2" stroke="#8a8a8a" stroke-width="0.8"/>
<path d="M648.600 231.500 H659.600 M648.600 237 H659.600 M648.600 242.500 H659.600 M654 226.2 V248.2" stroke="#c0c0c0" stroke-width="0.9"/>
<path d="M648.6 226.2 L652 229.700 L655 226.200z" fill="#bbbbbb"/>
</g>
<defs><linearGradient id="dome" x1="0" y1="0" x2="0" y2="1"><stop offset="0" stop-color="#86baea"/><stop offset="1" stop-color="#dcebf7"/></linearGradient></defs>
<rect x="664.3" y="226" width="22.8" height="22.4" fill="#d3dde8" stroke="#9fb2c6" stroke-width="0.8"/>
<path d="M665.3 247.500 V237.500 A10.400 10.400 0 0 1 686.100 237.500 V247.500z" fill="url(#dome)" stroke="#44668e" stroke-width="1.300"/>
<path d="M679.5 233.800 l-5.200 5.200 l3 0.800 l-3.400 4.600 l7.800 -6 l-3.200 -0.800 l3.600 -3.800z" fill="#f4b62c" stroke="#b07a10" stroke-width="0.500"/>
<rect x="691.600" y="226" width="23" height="22.4" fill="#cfd6de" stroke="#a8b4c2" stroke-width="0.8"/>
<path d="M692.600 247.500 V237.500 A10.500 10.500 0 0 1 713.600 237.500 V247.500z" fill="url(#dome)" stroke="#44668e" stroke-width="1.300"/>
<path d="M715.3 245.9 v3.2 h-3.2 z" fill="#f8f8f8"/>
<path d="M716 247.5 v2.3 h-2.3 z" fill="#0a0a0a"/>
<rect x="595.2" y="274" width="154.4" height="45.2" fill="none" stroke="#e9e9e9" stroke-width="1"/>
<rect x="594.2" y="273" width="154.4" height="45.2" fill="none" stroke="#8b8b8b" stroke-width="1"/>
<rect x="597.3" y="265" width="149.5" height="15.7" fill="#b4b4b4" stroke="#141414" stroke-width="1.3"/>
<path d="M598.500 279.7 V266.2 H746" fill="none" stroke="#dcdcdc" stroke-width="1"/>
<path d="M598 279.6 H746" fill="none" stroke="#d4d4d4" stroke-width="0.800"/>
<text x="658.9" y="276.2" font-size="11" fill="#0a0a0a" textLength="22.8" lengthAdjust="spacingAndGlyphs"  stroke="#0a0a0a" stroke-width="0.3">Stitch</text>
<rect x="619.3" y="286.3" width="18.3" height="23" fill="#86b7ee"/>
<rect x="619.3" y="286.3" width="18.3" height="8.9" fill="#e6707e"/>
<path d="M623.88 295.2 V309.3 M628.45 295.2 V309.3 M633.02 295.2 V309.3 M619.3 299.7 H637.6 M619.3 304.2 H637.6" stroke="#b4d3f5" stroke-width="0.700" fill="none"/>
<rect x="619.3" y="286.3" width="18.3" height="23" fill="none" stroke="#26385c" stroke-width="1.200"/>
<path d="M620.8 303.2 l1.34 2.600 l2.49 -4.400 M624.62 303.2 l1.34 2.600 l2.49 -4.400 M628.45 303.2 l1.34 2.600 l2.49 -4.400 M632.27 303.2 l1.34 2.600 l2.49 -4.400 " fill="none" stroke="#0e1a3c" stroke-width="2" transform="translate(0 1.300)"/>
<path d="M620.8 303.2 l1.34 2.600 l2.49 -4.400 M624.62 303.2 l1.34 2.600 l2.49 -4.400 M628.45 303.2 l1.34 2.600 l2.49 -4.400 M632.27 303.2 l1.34 2.600 l2.49 -4.400 " fill="none" stroke="#f8fbff" stroke-width="1.100"/>
<rect x="647.1" y="286.3" width="18.3" height="23" fill="#86b7ee"/>
<rect x="647.1" y="286.3" width="18.3" height="8.9" fill="#e6707e"/>
<path d="M651.67 295.2 V309.3 M656.25 295.2 V309.3 M660.83 295.2 V309.3 M647.1 299.7 H665.4 M647.1 304.2 H665.4" stroke="#b4d3f5" stroke-width="0.700" fill="none"/>
<rect x="647.1" y="286.3" width="18.3" height="23" fill="none" stroke="#26385c" stroke-width="1.200"/>
<path d="M648.6 299 l1.34 2.600 l2.49 -4.400 M652.42 299 l1.34 2.600 l2.49 -4.400 M656.25 299 l1.34 2.600 l2.49 -4.400 M660.08 299 l1.34 2.600 l2.49 -4.400 " fill="none" stroke="#0e1a3c" stroke-width="2" transform="translate(0 1.300)"/>
<path d="M648.6 299 l1.34 2.600 l2.49 -4.400 M652.42 299 l1.34 2.600 l2.49 -4.400 M656.25 299 l1.34 2.600 l2.49 -4.400 M660.08 299 l1.34 2.600 l2.49 -4.400 " fill="none" stroke="#f8fbff" stroke-width="1.100"/>
<rect x="674.6" y="286.3" width="18.6" height="23" fill="#86b7ee"/>
<rect x="674.6" y="286.3" width="18.6" height="10.7" fill="#e6707e"/>
<path d="M679.25 297 V309.3 M683.9 297 V309.3 M688.55 297 V309.3 M674.6 301.5 H693.2 M674.6 306 H693.2" stroke="#b4d3f5" stroke-width="0.700" fill="none"/>
<rect x="674.6" y="286.3" width="18.6" height="23" fill="none" stroke="#26385c" stroke-width="1.200"/>
<path d="M676.1 291.6 l1.37 2.600 l2.54 -4.400 M680 291.6 l1.37 2.600 l2.54 -4.400 M683.9 291.6 l1.37 2.600 l2.54 -4.400 M687.8 291.6 l1.37 2.600 l2.54 -4.400 " fill="none" stroke="#0e1a3c" stroke-width="2" transform="translate(0 1.300)"/>
<path d="M676.1 291.6 l1.37 2.600 l2.54 -4.400 M680 291.6 l1.37 2.600 l2.54 -4.400 M683.9 291.6 l1.37 2.600 l2.54 -4.400 M687.8 291.6 l1.37 2.600 l2.54 -4.400 " fill="none" stroke="#f8fbff" stroke-width="1.100"/>
<rect x="701.5" y="286.3" width="23.2" height="23" fill="#86b7ee"/>
<rect x="701.5" y="286.3" width="23.2" height="8.9" fill="#7f8ad8"/>
<path d="M707.3 295.2 V309.3 M713.1 295.2 V309.3 M718.9 295.2 V309.3 M701.5 299.7 H724.7 M701.5 304.2 H724.7" stroke="#b4d3f5" stroke-width="0.700" fill="none"/>
<rect x="701.5" y="286.3" width="23.2" height="23" fill="none" stroke="#26385c" stroke-width="1.200"/>
<path d="M703 296.5 l1.77 2.600 l3.28 -4.400 M708.05 296.5 l1.77 2.600 l3.28 -4.400 M713.1 296.5 l1.77 2.600 l3.28 -4.400 M718.15 296.5 l1.77 2.600 l3.28 -4.400 " fill="none" stroke="#0e1a3c" stroke-width="2" transform="translate(0 1.300)"/>
<path d="M703 296.5 l1.77 2.600 l3.28 -4.400 M708.05 296.5 l1.77 2.600 l3.28 -4.400 M713.1 296.5 l1.77 2.600 l3.28 -4.400 M718.15 296.5 l1.77 2.600 l3.28 -4.400 " fill="none" stroke="#f8fbff" stroke-width="1.100"/>
<path d="M640.500 287 V292.500 M695.200 304.500 V298.500 M667 297 H670" stroke="#111" stroke-width="1.100"/>
<path d="M640.500 294.500 l-2 -2.800 h4z M695.200 296.200 l-2 2.800 h4z M671.600 297 l-2.800 -2 v4z" fill="#111"/>
<path d="M725.7 306.6 v3.2 h-3.2 z" fill="#f8f8f8"/>
<path d="M726.4 308.2 v2.3 h-2.3 z" fill="#0a0a0a"/>
<rect x="595.2" y="334" width="154.4" height="92.7" fill="none" stroke="#e9e9e9" stroke-width="1"/>
<rect x="594.2" y="333" width="154.4" height="92.7" fill="none" stroke="#8b8b8b" stroke-width="1"/>
<rect x="597.3" y="325.7" width="149.5" height="15.1" fill="#b4b4b4" stroke="#141414" stroke-width="1.3"/>
<path d="M598.500 339.8 V326.9 H746" fill="none" stroke="#dcdcdc" stroke-width="1"/>
<path d="M598 339.7 H746" fill="none" stroke="#d4d4d4" stroke-width="0.800"/>
<text x="652.7" y="337.2" font-size="11" fill="#0a0a0a" textLength="36.8" lengthAdjust="spacingAndGlyphs"  stroke="#0a0a0a" stroke-width="0.3">Explode</text>
<rect x="601.6" y="333.55" width="3.8" height="1.2" fill="#111"/>
<g id="basket">
<path d="M605 356 q0 -2.600 2.600 -2.600 h16.600 q2.600 0 2.600 2.600 q-0.400 8 -4.400 12 q-1 1 -2.600 1 h-7.800 q-1.600 0 -2.600 -1 q-4 -4 -4.400 -12z" fill="#0c0c0c"/>
<rect x="606.85" y="354.6" width="2.74" height="2.300" fill="#f3f3f3"/>
<rect x="610.69" y="354.6" width="2.74" height="2.300" fill="#f3f3f3"/>
<rect x="614.53" y="354.6" width="2.74" height="2.300" fill="#f3f3f3"/>
<rect x="618.37" y="354.6" width="2.74" height="2.300" fill="#f3f3f3"/>
<rect x="622.21" y="354.6" width="2.74" height="2.300" fill="#f3f3f3"/>
<rect x="607.45" y="358.3" width="2.5" height="2.300" fill="#f3f3f3"/>
<rect x="611.05" y="358.3" width="2.5" height="2.300" fill="#f3f3f3"/>
<rect x="614.65" y="358.3" width="2.5" height="2.300" fill="#f3f3f3"/>
<rect x="618.25" y="358.3" width="2.5" height="2.300" fill="#f3f3f3"/>
<rect x="621.85" y="358.3" width="2.5" height="2.300" fill="#f3f3f3"/>
<rect x="608.55" y="362" width="2.06" height="2.300" fill="#f3f3f3"/>
<rect x="611.71" y="362" width="2.06" height="2.300" fill="#f3f3f3"/>
<rect x="614.87" y="362" width="2.06" height="2.300" fill="#f3f3f3"/>
<rect x="618.03" y="362" width="2.06" height="2.300" fill="#f3f3f3"/>
<rect x="621.19" y="362" width="2.06" height="2.300" fill="#f3f3f3"/>
<rect x="610.55" y="365.7" width="1.26" height="2.300" fill="#f3f3f3"/>
<rect x="612.91" y="365.7" width="1.26" height="2.300" fill="#f3f3f3"/>
<rect x="615.27" y="365.7" width="1.26" height="2.300" fill="#f3f3f3"/>
<rect x="617.63" y="365.7" width="1.26" height="2.300" fill="#f3f3f3"/>
<rect x="619.99" y="365.7" width="1.26" height="2.300" fill="#f3f3f3"/>
<path d="M612.200 351.800 L615.900 360.600 L619.600 351.800" fill="none" stroke="#0c0c0c" stroke-width="3.600"/>
<path d="M612.300 351.600 L615.900 360 L619.500 351.600" fill="none" stroke="#d81848" stroke-width="1.900"/>
</g>
<rect x="631.7" y="348.4" width="23" height="23" fill="#c4c4c4"/>
<rect x="631.7" y="348.4" width="5" height="16" fill="#b1b1b1"/>
<rect x="638.2" y="348.4" width="3.5" height="8" fill="#b1b1b1"/>
<rect x="643.2" y="348.4" width="11.5" height="6" fill="#b1b1b1"/>
<rect x="638.2" y="357.9" width="9.5" height="6.5" fill="#b1b1b1"/>
<rect x="649.2" y="355.9" width="5.5" height="8.5" fill="#b1b1b1"/>
<rect x="643.2" y="355.9" width="4.5" height="0.8" fill="#b1b1b1"/>
<rect x="631.7" y="365.9" width="11" height="5.5" fill="#b1b1b1"/>
<rect x="644.2" y="365.9" width="10.5" height="5.5" fill="#b1b1b1"/>
<rect x="659.1" y="348.4" width="23" height="23" fill="#c4c4c4"/>
<rect x="659.1" y="348.4" width="5" height="16" fill="#b1b1b1"/>
<rect x="665.6" y="348.4" width="3.5" height="8" fill="#b1b1b1"/>
<rect x="670.6" y="348.4" width="11.5" height="6" fill="#b1b1b1"/>
<rect x="665.6" y="357.9" width="9.5" height="6.5" fill="#b1b1b1"/>
<rect x="676.6" y="355.9" width="5.5" height="8.5" fill="#b1b1b1"/>
<rect x="670.6" y="355.9" width="4.5" height="0.8" fill="#b1b1b1"/>
<rect x="659.1" y="365.9" width="11" height="5.5" fill="#b1b1b1"/>
<rect x="671.6" y="365.9" width="10.5" height="5.5" fill="#b1b1b1"/>
<rect x="686.6" y="348.4" width="23" height="23" fill="#c4c4c4"/>
<rect x="686.6" y="348.4" width="5" height="16" fill="#b1b1b1"/>
<rect x="693.1" y="348.4" width="3.5" height="8" fill="#b1b1b1"/>
<rect x="698.1" y="348.4" width="11.5" height="6" fill="#b1b1b1"/>
<rect x="693.1" y="357.9" width="9.5" height="6.5" fill="#b1b1b1"/>
<rect x="704.1" y="355.9" width="5.5" height="8.5" fill="#b1b1b1"/>
<rect x="698.1" y="355.9" width="4.5" height="0.8" fill="#b1b1b1"/>
<rect x="686.6" y="365.9" width="11" height="5.5" fill="#b1b1b1"/>
<rect x="699.1" y="365.9" width="10.5" height="5.5" fill="#b1b1b1"/>
<rect x="714.5" y="348.4" width="23" height="23" fill="#c4c4c4"/>
<rect x="714.5" y="348.4" width="5" height="16" fill="#b1b1b1"/>
<rect x="721" y="348.4" width="3.5" height="8" fill="#b1b1b1"/>
<rect x="726" y="348.4" width="11.5" height="6" fill="#b1b1b1"/>
<rect x="721" y="357.9" width="9.5" height="6.5" fill="#b1b1b1"/>
<rect x="732" y="355.9" width="5.5" height="8.5" fill="#b1b1b1"/>
<rect x="726" y="355.9" width="4.5" height="0.8" fill="#b1b1b1"/>
<rect x="714.5" y="365.9" width="11" height="5.5" fill="#b1b1b1"/>
<rect x="727" y="365.9" width="10.5" height="5.5" fill="#b1b1b1"/>
<path d="M654.600 371.200 H644.600 L654.600 362.200z" fill="#8c8c8c" stroke="#7a7a7a" stroke-width="0.600"/>
<rect x="670.200" y="360.200" width="11.800" height="11" fill="#d4d4d4" stroke="#6e6e6e" stroke-width="1"/>
<path d="M670.200 363.400 H682 M670.200 367.200 H682 M674.100 363.400 V371.200 M678 363.400 V371.200" stroke="#6e6e6e" stroke-width="0.9"/>
<defs><radialGradient id="sph" cx="0.4" cy="0.350" r="0.700"><stop offset="0" stop-color="#c9c9c9"/><stop offset="0.600" stop-color="#8e8e8e"/><stop offset="1" stop-color="#606060"/></radialGradient></defs>
<circle cx="702" cy="363.500" r="7.800" fill="url(#sph)"/>
<path d="M737.9 368.3 v3.2 h-3.2 z" fill="#f8f8f8"/>
<path d="M738.6 369.9 v2.3 h-2.3 z" fill="#0a0a0a"/>
<rect x="602.4" y="381.6" width="142.2" height="42.4" fill="none" stroke="#d2d2d2" stroke-width="1"/>
<rect x="601.4" y="380.6" width="142.2" height="42.4" fill="none" stroke="#707070" stroke-width="1.100"/>
<rect x="607.5" y="379.1" width="28" height="4" fill="#bbbbbb"/>
<text x="609.5" y="384.5" font-size="11" fill="#0a0a0a" textLength="23.5" lengthAdjust="spacingAndGlyphs"  stroke="#0a0a0a" stroke-width="0.3">Weld</text>
<circle cx="620.8" cy="402.7" r="11.300" fill="#fff" stroke="#222" stroke-width="1.100"/>
<circle cx="620.8" cy="402.7" r="8" fill="none" stroke="#222" stroke-width="1.300"/>
<circle cx="620.8" cy="402.7" r="5" fill="none" stroke="#222" stroke-width="1"/>
<circle cx="620.8" cy="402.7" r="2.600" fill="#cc1840"/>
<path d="M638.800 391.600 L660 414.400 M660 391.600 L638.800 414.400" stroke="#777" stroke-width="0.900"/>
<rect x="643.4" y="393" width="11.600" height="20.400" rx="2" fill="#ee8c90"/>
<path d="M646.600 394.500 V399.500 M651.600 394.500 V399.500 M646.600 405.500 V411 M651.600 405.500 V411" stroke="#b8182c" stroke-width="1"/>
<circle cx="646.6" cy="395.5" r="1.200" fill="#f4a0a4" stroke="#b8182c" stroke-width="0.700"/>
<circle cx="646.6" cy="398.8" r="1.200" fill="#f4a0a4" stroke="#b8182c" stroke-width="0.700"/>
<circle cx="646.6" cy="406.5" r="1.200" fill="#f4a0a4" stroke="#b8182c" stroke-width="0.700"/>
<circle cx="646.6" cy="409.8" r="1.200" fill="#f4a0a4" stroke="#b8182c" stroke-width="0.700"/>
<circle cx="651.6" cy="395.5" r="1.200" fill="#f4a0a4" stroke="#b8182c" stroke-width="0.700"/>
<circle cx="651.6" cy="398.8" r="1.200" fill="#f4a0a4" stroke="#b8182c" stroke-width="0.700"/>
<circle cx="651.6" cy="406.5" r="1.200" fill="#f4a0a4" stroke="#b8182c" stroke-width="0.700"/>
<circle cx="651.6" cy="409.8" r="1.200" fill="#f4a0a4" stroke="#b8182c" stroke-width="0.700"/>
<rect x="639.400" y="401.400" width="19.800" height="2.400" fill="#fff" stroke="#c8c8c8" stroke-width="0.400"/>
<path d="M661.5 412.5 v3.2 h-3.2 z" fill="#f8f8f8"/>
<path d="M662.2 414.1 v2.3 h-2.3 z" fill="#0a0a0a"/>
<text x="678.8" y="395.2" font-size="11" fill="#0a0a0a" textLength="49.1" lengthAdjust="spacingAndGlyphs"  stroke="#0a0a0a" stroke-width="0.3">Threshold:</text>
<rect x="678.8" y="400.7" width="28.7" height="14.1" fill="#e2e2e2"/>
<path d="M679.25 414.8 V401.15 H707.5" fill="none" stroke="#161616" stroke-width="1.900"/>
<path d="M680.7 414.3 V402.6 H707" fill="none" stroke="#a4a4a4" stroke-width="0.900"/>
<path d="M678.8 414.8 H707.5 V400.7" fill="none" stroke="#f2f2f2" stroke-width="1"/>
<text x="682" y="411.2" font-size="11" fill="#000" textLength="21.6" lengthAdjust="spacingAndGlyphs"  stroke="#000" stroke-width="0.3">0,01</text>
<rect x="709.1" y="400.7" width="10.5" height="14.1" fill="#c0c0c0"/>
<path d="M709.6 414.8 V401.2 H719.6" fill="none" stroke="#ededed" stroke-width="1"/>
<path d="M709.1 414.6 H719.4 V400.7" fill="none" stroke="#7c7c7c" stroke-width="1"/>
<path d="M714.35 403.15 l3 3.3 h-6z M714.35 412.55 l3 -3.3 h-6z" fill="#111"/>
<rect x="595.2" y="442" width="154.4" height="122.3" fill="none" stroke="#e9e9e9" stroke-width="1"/>
<rect x="594.2" y="441" width="154.4" height="122.3" fill="none" stroke="#8b8b8b" stroke-width="1"/>
<rect x="597.3" y="433.5" width="149.5" height="15.2" fill="#b4b4b4" stroke="#141414" stroke-width="1.3"/>
<path d="M598.500 447.7 V434.7 H746" fill="none" stroke="#dcdcdc" stroke-width="1"/>
<path d="M598 447.6 H746" fill="none" stroke="#d4d4d4" stroke-width="0.800"/>
<text x="661.3" y="444.8" font-size="11" fill="#0a0a0a" textLength="19.6" lengthAdjust="spacingAndGlyphs"  stroke="#0a0a0a" stroke-width="0.3">Peel</text>
<rect x="601.6" y="441.4" width="3.8" height="1.2" fill="#111"/>
<rect x="607.4" y="459.2" width="133" height="54.8" fill="none" stroke="#d2d2d2" stroke-width="1"/>
<rect x="606.4" y="458.2" width="133" height="54.8" fill="none" stroke="#707070" stroke-width="1.100"/>
<rect x="633" y="466.8" width="12.600" height="12.200" fill="#cfcfcf"/>
<path d="M633.400 479 V467.200 H645.600" fill="none" stroke="#505050" stroke-width="1.800"/>
<path d="M633 479 H645.600 V466.800" fill="none" stroke="#f0f0f0" stroke-width="1"/>
<path d="M636 472.200 L638.800 476 L643.600 469.600" fill="none" stroke="#5c5c5c" stroke-width="1.900"/>
<text x="654.5" y="475.9" font-size="11" fill="#0a0a0a" textLength="33.1" lengthAdjust="spacingAndGlyphs"  stroke="#0a0a0a" stroke-width="0.3">Detach</text>
<defs><radialGradient id="blob" cx="0.4" cy="0.350" r="0.750"><stop offset="0" stop-color="#c2c2c2"/><stop offset="0.600" stop-color="#939393"/><stop offset="1" stop-color="#747474"/></radialGradient></defs>
<path d="M641.500 484.500 q4 1 4.500 6 q6 1.500 6.500 8 q-0.500 7.500 -9 8 q-9 0 -10 -7 q-0.500 -6 5 -8.500 q0 -4.500 3 -6.500z" fill="url(#blob)"/>
<path d="M645 499 q3.500 1.500 7 -0.500 M640 490 q2 2 1.500 5" stroke="#d6d6d6" stroke-width="1.100" fill="none"/>
<path d="M672 484.500 q4 1 4.500 6 q5.500 2 5.500 8 q-0.500 7.500 -9 8 q-9 0 -10 -7 q-0.500 -6 5 -8.500 q0 -4.500 4 -6.500z" fill="url(#blob)"/>
<path d="M671 490 q2 2 1.500 5" stroke="#d6d6d6" stroke-width="1.100" fill="none"/>
<circle cx="700.300" cy="497.200" r="9.200" fill="url(#blob)"/>
<path d="M694 492.800 q5.500 -4.400 11.200 -0.600 q3.600 3.400 2.400 8" fill="none" stroke="#c9c9c9" stroke-width="2.600"/>
<path d="M688.600 489 l8.400 -0.600 l-2 2.800 l2.400 3.400 l-4.600 0.200 l-1.600 2.600z" fill="#b9b9b9" stroke="#9a9a9a" stroke-width="0.600"/>
<rect x="607.4" y="518.8" width="132.6" height="41.7" fill="none" stroke="#d2d2d2" stroke-width="1"/>
<rect x="606.4" y="517.8" width="132.6" height="41.7" fill="none" stroke="#707070" stroke-width="1.100"/>
<rect x="612.5" y="516.3" width="26.5" height="4" fill="#bbbbbb"/>
<text x="614.5" y="521.7" font-size="11" fill="#0a0a0a" textLength="22" lengthAdjust="spacingAndGlyphs"  stroke="#0a0a0a" stroke-width="0.3">Pins:</text>
<g transform="translate(620.4 547.4) rotate(-42)">
<path d="M1.500 0 H10" stroke="#6a6a6a" stroke-width="1" stroke-dasharray="1.600 0.900"/>
<rect x="9.500" y="-3.300" width="2.200" height="6.600" rx="0.600" fill="#8f8f8f" stroke="#6a6a6a" stroke-width="0.600"/>
<rect x="11.700" y="-1.700" width="4.600" height="3.400" fill="#8f8f8f" stroke="#6a6a6a" stroke-width="0.600"/>
<rect x="11.700" y="-1.500" width="4.600" height="1.200" fill="#c9c9c9"/>
<rect x="16.300" y="-3.600" width="2.800" height="7.200" rx="1.100" fill="#8f8f8f" stroke="#6a6a6a" stroke-width="0.600"/>
<rect x="16.700" y="-3" width="2" height="2" fill="#c9c9c9"/>
</g>
<rect x="619.4" y="546.4" width="2" height="2" fill="#e6e6e6" stroke="#555" stroke-width="0.800"/>
<g transform="translate(646.3 547.4) rotate(-42)">
<path d="M1.500 0 H10" stroke="#6a6a6a" stroke-width="1" stroke-dasharray="1.600 0.900"/>
<rect x="9.500" y="-3.300" width="2.200" height="6.600" rx="0.600" fill="#8f8f8f" stroke="#6a6a6a" stroke-width="0.600"/>
<rect x="11.700" y="-1.700" width="4.600" height="3.400" fill="#8f8f8f" stroke="#6a6a6a" stroke-width="0.600"/>
<rect x="11.700" y="-1.500" width="4.600" height="1.200" fill="#c9c9c9"/>
<rect x="16.300" y="-3.600" width="2.800" height="7.200" rx="1.100" fill="#8f8f8f" stroke="#6a6a6a" stroke-width="0.600"/>
<rect x="16.700" y="-3" width="2" height="2" fill="#c9c9c9"/>
</g>
<rect x="645.3" y="546.4" width="2" height="2" fill="#e6e6e6" stroke="#555" stroke-width="0.800"/>
<path d="M654.200 541.600 l8.400 8.400 M662.600 541.600 l-8.400 8.400" stroke="#8c8c8c" stroke-width="3.800" stroke-linecap="round"/>
<path d="M654.200 541.600 l8.400 8.400 M662.600 541.600 l-8.400 8.400" stroke="#b2b2b2" stroke-width="2.200" stroke-linecap="round"/>
<rect x="668.3" y="528.2" width="25.900" height="27" fill="#f2c94e"/>
<g transform="translate(674.8 549.4) rotate(-42)">
<path d="M1.500 0 H10" stroke="#1c6a14" stroke-width="1" stroke-dasharray="1.600 0.900"/>
<rect x="9.500" y="-3.300" width="2.200" height="6.600" rx="0.600" fill="#56c040" stroke="#1c6a14" stroke-width="0.600"/>
<rect x="11.700" y="-1.700" width="4.600" height="3.400" fill="#56c040" stroke="#1c6a14" stroke-width="0.600"/>
<rect x="11.700" y="-1.500" width="4.600" height="1.200" fill="#b6f09a"/>
<rect x="16.300" y="-3.600" width="2.800" height="7.200" rx="1.100" fill="#56c040" stroke="#1c6a14" stroke-width="0.600"/>
<rect x="16.700" y="-3" width="2" height="2" fill="#b6f09a"/>
</g>
<rect x="673.8" y="548.4" width="2" height="2" fill="#2a1a00" stroke="#2a1a00" stroke-width="0.800"/>
<path d="M684.600 553.600 l9.400 -6.600 l0.600 1.400 l-8.200 6.800z" fill="#e8b020" stroke="#5a3a00" stroke-width="0.800"/>
<path d="M688.500 541.500 q2.600 1.600 2 4.600 l-3.400 2.200" stroke="#d85a1a" stroke-width="1.100" fill="none"/>
<path d="M685.800 546.800 l3.400 3.600 l-4.200 -0.400z" fill="#fff6c0"/>
<rect x="699.65" y="534.4" width="1.3" height="10" fill="#4e5566"/>
<g transform="translate(711.5 547.4) rotate(-42)">
<path d="M1.500 0 H10" stroke="#6a6a6a" stroke-width="1" stroke-dasharray="1.600 0.900"/>
<rect x="9.500" y="-3.300" width="2.200" height="6.600" rx="0.600" fill="#8f8f8f" stroke="#6a6a6a" stroke-width="0.600"/>
<rect x="11.700" y="-1.700" width="4.600" height="3.400" fill="#8f8f8f" stroke="#6a6a6a" stroke-width="0.600"/>
<rect x="11.700" y="-1.500" width="4.600" height="1.200" fill="#c9c9c9"/>
<rect x="16.300" y="-3.600" width="2.800" height="7.200" rx="1.100" fill="#8f8f8f" stroke="#6a6a6a" stroke-width="0.600"/>
<rect x="16.700" y="-3" width="2" height="2" fill="#c9c9c9"/>
</g>
<rect x="710.5" y="546.4" width="2" height="2" fill="#e6e6e6" stroke="#555" stroke-width="0.800"/>
<path d="M721.300 539.400 v13.200 l2.900 -2.700 l2.300 5 l2.100 -1 l-2.300 -4.800 h4.200z" fill="#f4f4f4" stroke="#4a4a4a" stroke-width="0.900" stroke-linejoin="round"/>
<rect x="595.2" y="580" width="154.4" height="101" fill="none" stroke="#e9e9e9" stroke-width="1"/>
<rect x="594.2" y="579" width="154.4" height="101" fill="none" stroke="#8b8b8b" stroke-width="1"/>
<rect x="597.3" y="571.3" width="149.5" height="15.2" fill="#b4b4b4" stroke="#141414" stroke-width="1.3"/>
<path d="M598.500 585.5 V572.5 H746" fill="none" stroke="#dcdcdc" stroke-width="1"/>
<path d="M598 585.4 H746" fill="none" stroke="#d4d4d4" stroke-width="0.800"/>
<text x="630.2" y="582.6" font-size="11" fill="#0a0a0a" textLength="83.2" lengthAdjust="spacingAndGlyphs"  stroke="#0a0a0a" stroke-width="0.3">Arrange Elements</text>
<rect x="601.6" y="579.2" width="3.8" height="1.2" fill="#111"/>
<rect x="637.5" y="594.2" width="106" height="86.8" fill="none" stroke="#d2d2d2" stroke-width="1"/>
<rect x="636.5" y="593.2" width="106" height="86.8" fill="none" stroke="#707070" stroke-width="1.100"/>
<rect x="602" y="606" width="24" height="24" rx="2.500" fill="none" stroke="#222" stroke-width="1.100" stroke-dasharray="1.800 1.800"/>
<g transform="translate(602 606) scale(1)">
<rect x="2" y="2" width="5" height="12" fill="#8bb9eb" stroke="#5f95d5" stroke-width="0.900"/>
<rect x="8.5" y="2" width="6" height="6" fill="#8bb9eb" stroke="#5f95d5" stroke-width="0.900"/>
<rect x="16" y="2" width="6" height="12" fill="#8bb9eb" stroke="#5f95d5" stroke-width="0.900"/>
<rect x="8.5" y="9.5" width="6" height="4.5" fill="#8bb9eb" stroke="#5f95d5" stroke-width="0.900"/>
<rect x="2" y="15.8" width="9.2" height="6.2" fill="#8bb9eb" stroke="#5f95d5" stroke-width="0.900"/>
<rect x="12.8" y="15.8" width="9.2" height="6.2" fill="#8bb9eb" stroke="#5f95d5" stroke-width="0.900"/>
</g>
<path d="M626.9 627.9 v3.2 h-3.2 z" fill="#f8f8f8"/>
<path d="M627.6 629.5 v2.3 h-2.3 z" fill="#0a0a0a"/>
<rect x="641.8" y="606" width="24.4" height="24" rx="2.500" fill="none" stroke="#222" stroke-width="1.100" stroke-dasharray="1.800 1.800"/>
<g transform="translate(643.8 614.08) scale(0.59)">
<rect x="2" y="2" width="5" height="12" fill="#8bb9eb" stroke="#5f95d5" stroke-width="0.900"/>
<rect x="8.5" y="2" width="6" height="6" fill="#8bb9eb" stroke="#5f95d5" stroke-width="0.900"/>
<rect x="16" y="2" width="6" height="12" fill="#8bb9eb" stroke="#5f95d5" stroke-width="0.900"/>
<rect x="8.5" y="9.5" width="6" height="4.5" fill="#8bb9eb" stroke="#5f95d5" stroke-width="0.900"/>
<rect x="2" y="15.8" width="9.2" height="6.2" fill="#8bb9eb" stroke="#5f95d5" stroke-width="0.900"/>
<rect x="12.8" y="15.8" width="9.2" height="6.2" fill="#8bb9eb" stroke="#5f95d5" stroke-width="0.900"/>
</g>
<rect x="641.8" y="638.2" width="24.4" height="21" rx="2.500" fill="none" stroke="#222" stroke-width="1.100" stroke-dasharray="1.800 1.800"/>
<g transform="translate(645.46 641.35) scale(0.71)">
<rect x="2" y="2" width="5" height="12" fill="#8bb9eb" stroke="#5f95d5" stroke-width="0.900"/>
<rect x="8.5" y="2" width="6" height="6" fill="#8bb9eb" stroke="#5f95d5" stroke-width="0.900"/>
<rect x="16" y="2" width="6" height="12" fill="#8bb9eb" stroke="#5f95d5" stroke-width="0.900"/>
<rect x="8.5" y="9.5" width="6" height="4.5" fill="#8bb9eb" stroke="#5f95d5" stroke-width="0.900"/>
<rect x="2" y="15.8" width="9.2" height="6.2" fill="#8bb9eb" stroke="#5f95d5" stroke-width="0.900"/>
<rect x="12.8" y="15.8" width="9.2" height="6.2" fill="#8bb9eb" stroke="#5f95d5" stroke-width="0.900"/>
</g>
<path d="M643.800 640 l3 3 M664.200 640 l-3 3" stroke="#222" stroke-width="0.900"/>
<rect x="603.5" y="639" width="10.200" height="9" fill="#dfe3e8" stroke="#6b7788" stroke-width="0.900"/>
<rect x="616.300" y="642.300" width="9.500" height="8" fill="#dfe3e8" stroke="#6b7788" stroke-width="0.900"/>
<rect x="603.500" y="646.600" width="10.200" height="11.600" fill="#4f93de" stroke="#2a62b0" stroke-width="0.900"/>
<rect x="614.700" y="646.600" width="10.200" height="11.600" fill="#4f93de" stroke="#2a62b0" stroke-width="0.900"/>
<path d="M603.500 650.500 H625 M603.500 654.400 H625 M607 646.600 V658.200 M610.400 646.600 V658.200 M618.200 646.600 V658.200 M621.600 646.600 V658.200" stroke="#9cc4f0" stroke-width="0.700"/>
<rect x="613.600" y="646" width="1.300" height="12.200" fill="#0c2c66"/>
<rect x="676.2" y="602.7" width="12.100" height="11.400" fill="#ececec"/>
<path d="M676.5 614.1 V603 H688.3" fill="none" stroke="#3a3a3a" stroke-width="1.500"/>
<path d="M676.2 614.1 H688.3 V602.7" fill="none" stroke="#f6f6f6" stroke-width="1"/>
<path d="M679 608.3 l2.800 3.400 l4.600 -6.400" fill="none" stroke="#000" stroke-width="1.900"/>
<text x="695.8" y="612" font-size="11" fill="#0a0a0a" textLength="36.1" lengthAdjust="spacingAndGlyphs"  stroke="#0a0a0a" stroke-width="0.3">Rescale</text>
<rect x="676.2" y="623.4" width="12.100" height="11.400" fill="#ececec"/>
<path d="M676.5 634.8 V623.7 H688.3" fill="none" stroke="#3a3a3a" stroke-width="1.500"/>
<path d="M676.2 634.8 H688.3 V623.4" fill="none" stroke="#f6f6f6" stroke-width="1"/>
<text x="695.8" y="632.8" font-size="11" fill="#0a0a0a" textLength="32.2" lengthAdjust="spacingAndGlyphs"  stroke="#0a0a0a" stroke-width="0.3">Rotate</text>
<text x="677" y="650" font-size="11" fill="#0a0a0a" textLength="40.4" lengthAdjust="spacingAndGlyphs"  stroke="#0a0a0a" stroke-width="0.3">Padding:</text>
<rect x="676.2" y="656.8" width="36.8" height="15.2" fill="#e2e2e2"/>
<path d="M676.65 672 V657.25 H713" fill="none" stroke="#161616" stroke-width="1.900"/>
<path d="M678.1 671.5 V658.7 H712.5" fill="none" stroke="#a4a4a4" stroke-width="0.900"/>
<path d="M676.2 672 H713 V656.8" fill="none" stroke="#f2f2f2" stroke-width="1"/>
<rect x="714" y="656.8" width="10.8" height="15.2" fill="#c0c0c0"/>
<path d="M714.5 672 V657.3 H724.8" fill="none" stroke="#ededed" stroke-width="1"/>
<path d="M714 671.8 H724.6 V656.8" fill="none" stroke="#7c7c7c" stroke-width="1"/>
<path d="M719.4 659.8 l3 3.3 h-6z M719.4 669.2 l3 -3.3 h-6z" fill="#111"/>
</g>
<rect x="591" y="659.300" width="160" height="1" fill="#e8e8e8"/>
</g>
<g id="bottom">
<rect x="76" y="664.600" width="675" height="58" fill="#bbbbbb"/>
<rect x="76" y="664.600" width="675" height="1" fill="#dedede"/>
<rect x="76" y="692.800" width="675" height="1.200" fill="#6e6e6e"/>
<rect x="76" y="694" width="675" height="1" fill="#dadada"/>
<rect x="523.300" y="665" width="1.300" height="28" fill="#666"/>
<rect x="524.600" y="665" width="1" height="28" fill="#e2e2e2"/>
<rect x="339.800" y="694.500" width="1.300" height="28" fill="#555"/>
<rect x="341.100" y="694.500" width="1" height="28" fill="#e2e2e2"/>
<rect x="94.2" y="670.9" width="3.400" height="3.400" fill="#f6eaea" stroke="#b01836" stroke-width="1.100"/>
<rect x="82.1" y="679.9" width="3.400" height="3.400" fill="#f6eaea" stroke="#b01836" stroke-width="1.100"/>
<rect x="89.2" y="684.6" width="3.400" height="3.400" fill="#f6eaea" stroke="#b01836" stroke-width="1.100"/>
<rect x="104.500" y="666.700" width="25.500" height="25.900" fill="#f2c94e"/>
<path d="M128.800 671.400 L110 684.700 L121.800 690.700" fill="none" stroke="#c87a10" stroke-width="1.300"/>
<path d="M128.800 671.400 L121.800 690.700" fill="none" stroke="#c87a10" stroke-width="1" stroke-dasharray="1.600 1.300"/>
<rect x="127.800" y="669.800" width="2" height="2" fill="#c86a10"/>
<rect x="136.900" y="671.100" width="17.200" height="16.400" fill="#ee5a5c" stroke="#c43a4a" stroke-width="1.100"/>
<rect x="163.45" y="671.4" width="1.3" height="10.4" fill="#4e5566"/>
<g id="cube1">
<path d="M171.600 673 L183 668.600 L194.600 673.800 V686.500 L183.500 691.500 L171.600 685.500z" fill="#fafafa" stroke="#8a8a8a" stroke-width="0.900"/>
<path d="M171.600 673 L183.500 678 V691.500 L171.600 685.500z" fill="#a9a9a9"/>
<path d="M183.500 678 L194.600 673.800 V686.500 L183.500 691.500z" fill="#d9d9d9"/>
<rect x="184.800" y="681.300" width="9.400" height="9.600" fill="#fbfbfb" stroke="#222" stroke-width="1.200"/>
</g>
<rect x="201.55" y="671.4" width="1.3" height="10.4" fill="#4e5566"/>
<rect x="209" y="668.300" width="23.600" height="23.300" fill="#5e9ee4" stroke="#2b3f5e" stroke-width="1.100"/>
<rect x="209.600" y="668.900" width="22.400" height="22" fill="none" stroke="#9cc6f2" stroke-width="1"/>
<rect x="210.300" y="681.500" width="10.300" height="9.500" fill="#b4b4b4" stroke="#6a6a6a" stroke-width="0.900"/>
<path d="M220.600 678 H231.500 M220.600 678 V681.500" stroke="#3c6aa8" stroke-width="0.900" fill="none"/>
<path d="M221.800 676.200 H229.800 M225.800 672.200 V680.200" stroke="#0f7a22" stroke-width="2.600"/>
<rect x="236.600" y="668.300" width="23.600" height="23.300" fill="#b9b9b9" stroke="#2b3f5e" stroke-width="1.100"/>
<rect x="237.200" y="681.500" width="10.600" height="9.600" fill="#5e9ee4" stroke="#2f5a96" stroke-width="0.900"/>
<path d="M247.800 678 H259.600 M247.800 678 V681.500" stroke="#777" stroke-width="0.900" fill="none"/>
<path d="M248.800 675.400 H257.600" stroke="#0f7a22" stroke-width="2.600"/>
<rect x="265.2" y="672.6" width="22.8" height="5" rx="1.200" fill="#68b846" stroke="#2a6c1c" stroke-width="1.200"/>
<rect x="266.5" y="673.5" width="20.2" height="2.25" rx="0.600" fill="#8fd468"/>
<path d="M272.800 672.600 V677.600 M280.600 672.600 V677.600" stroke="#2a6c1c" stroke-width="1"/>
<rect x="293.500" y="673.700" width="23.500" height="3" fill="#adadad"/><rect x="294.500" y="674.500" width="21.500" height="1" fill="#c4c4c4"/>
<path d="M297.1 681.2 H314.9 M306 672.6 V689.8" stroke="#ffffff" stroke-width="5.8" stroke-linecap="square" fill="none"/>
<path d="M297.1 681.2 H314.9 M306 672.6 V689.8" stroke="#0a0a0a" stroke-width="3.2" fill="none"/>
<rect x="321" y="673.700" width="23.500" height="3" fill="#adadad"/><rect x="322" y="674.500" width="21.500" height="1" fill="#c4c4c4"/>
<path d="M325.6 683 H342.2" stroke="#ffffff" stroke-width="5.5" stroke-linecap="square" fill="none"/>
<path d="M325.6 683 H342.2" stroke="#0a0a0a" stroke-width="2.9" fill="none"/>
<rect x="348.5" y="668.6" width="22.3" height="3.9" rx="1.200" fill="#68b846" stroke="#2a6c1c" stroke-width="1.200"/>
<rect x="349.8" y="669.5" width="19.7" height="1.75" rx="0.600" fill="#b9eaa0"/>
<rect x="348.5" y="676.2" width="22.3" height="4.1" rx="1.200" fill="#68b846" stroke="#2a6c1c" stroke-width="1.200"/>
<rect x="349.8" y="677.1" width="19.7" height="1.84" rx="0.600" fill="#eefbe6"/>
<rect x="348.5" y="684.6" width="22.3" height="4" rx="1.200" fill="#68b846" stroke="#2a6c1c" stroke-width="1.200"/>
<rect x="349.8" y="685.5" width="19.7" height="1.8" rx="0.600" fill="#b9eaa0"/>
<rect x="375.6" y="668.6" width="21.8" height="3.8" rx="1" fill="#b7c4ae" stroke="#a3b29a" stroke-width="0.900"/>
<rect x="376.8" y="669.5" width="19.4" height="1.52" fill="#c3cdbc"/>
<rect x="375.6" y="676.4" width="21.8" height="3.8" rx="1" fill="#b7c4ae" stroke="#a3b29a" stroke-width="0.900"/>
<rect x="376.8" y="677.3" width="19.4" height="1.52" fill="#c3cdbc"/>
<rect x="375.6" y="684.6" width="21.8" height="3.8" rx="1" fill="#b7c4ae" stroke="#a3b29a" stroke-width="0.900"/>
<rect x="376.8" y="685.5" width="19.4" height="1.52" fill="#c3cdbc"/>
<path d="M379.5 681.2 H397.9 M388.7 672.3 V690.1" stroke="#ffffff" stroke-width="5.8" stroke-linecap="square" fill="none"/>
<path d="M379.5 681.2 H397.9 M388.7 672.3 V690.1" stroke="#0a0a0a" stroke-width="3.2" fill="none"/>
<rect x="403.4" y="668.6" width="21.2" height="3.8" rx="1" fill="#b7c4ae" stroke="#a3b29a" stroke-width="0.900"/>
<rect x="404.6" y="669.5" width="18.8" height="1.52" fill="#c3cdbc"/>
<rect x="403.4" y="676.4" width="21.2" height="3.8" rx="1" fill="#b7c4ae" stroke="#a3b29a" stroke-width="0.900"/>
<rect x="404.6" y="677.3" width="18.8" height="1.52" fill="#c3cdbc"/>
<rect x="403.4" y="684.6" width="21.2" height="3.8" rx="1" fill="#b7c4ae" stroke="#a3b29a" stroke-width="0.900"/>
<rect x="404.6" y="685.5" width="18.8" height="1.52" fill="#c3cdbc"/>
<path d="M407.4 681.2 H425.2" stroke="#ffffff" stroke-width="5.8" stroke-linecap="square" fill="none"/>
<path d="M407.4 681.2 H425.2" stroke="#0a0a0a" stroke-width="3.2" fill="none"/>
<g id="brush">
<defs><linearGradient id="bristle" x1="0" y1="0" x2="1" y2="1"><stop offset="0" stop-color="#e0a63c"/><stop offset="0.600" stop-color="#b87a1c"/><stop offset="1" stop-color="#6e4208"/></linearGradient></defs>
<path d="M432.800 686.800 q3.200 -5.800 11.600 -8.200 q2.800 0.800 2.200 3.800 q-3.600 6.200 -10.200 6 q-2.200 -0.200 -3.600 -1.600z" fill="url(#bristle)"/>
<path d="M445.600 677.600 l4.600 -5.400 l1.900 1.500 l-4.300 5.700z" fill="#f4f4f4" stroke="#555" stroke-width="0.500"/>
<path d="M450.300 672.200 l2.600 -3.200 l1.200 0.900 l-2 3.700z" fill="#2c2c2c"/>
</g>
<circle cx="465.4" cy="674.7" r="7.2" fill="#868686"/>
<g transform="translate(29.5 0)">
<path d="M432.800 688.800 q3.200 -5.800 11.600 -8.200 q2.800 0.800 2.200 3.800 q-3.600 6.200 -10.200 6 q-2.200 -0.200 -3.600 -1.600z" fill="#8f8f8f"/>
<path d="M445.600 679.600 l4.600 -5.400 l1.900 1.500 l-4.300 5.700z" fill="#d6d6d6" stroke="#9a9a9a" stroke-width="0.500"/>
<path d="M450.300 674.200 l2.800 -3.400 l1.300 1 l-2.200 3.900z" fill="#a2a2a2"/>
</g>
<circle cx="493" cy="673.9" r="3.9" fill="#868686"/>
<g transform="translate(57.5 0)">
<path d="M432.800 688.800 q3.200 -5.800 11.600 -8.200 q2.800 0.800 2.200 3.800 q-3.600 6.200 -10.200 6 q-2.200 -0.200 -3.600 -1.600z" fill="#8f8f8f"/>
<path d="M445.600 679.600 l4.600 -5.400 l1.900 1.500 l-4.300 5.700z" fill="#d6d6d6" stroke="#9a9a9a" stroke-width="0.500"/>
<path d="M450.300 674.200 l2.800 -3.400 l1.300 1 l-2.200 3.900z" fill="#a2a2a2"/>
</g>
<defs><radialGradient id="org" cx="0.5" cy="0.5" r="0.5"><stop offset="0" stop-color="#f2921a"/><stop offset="0.550" stop-color="#f29a22"/><stop offset="0.800" stop-color="#efc04a"/><stop offset="1" stop-color="#d9d08a"/></radialGradient></defs>
<circle cx="539.700" cy="679" r="10.800" fill="url(#org)" stroke="#b9b47c" stroke-width="0.700"/>
<rect x="557.6" y="669.6" width="35.9" height="13.9" fill="#e2e2e2"/>
<path d="M558.05 683.5 V670.05 H593.5" fill="none" stroke="#161616" stroke-width="1.900"/>
<path d="M559.5 683 V671.5 H593" fill="none" stroke="#a4a4a4" stroke-width="0.900"/>
<path d="M557.6 683.5 H593.5 V669.6" fill="none" stroke="#f2f2f2" stroke-width="1"/>
<text x="560.4" y="681" font-size="11" fill="#000" textLength="15.5" lengthAdjust="spacingAndGlyphs"  stroke="#000" stroke-width="0.3">0,0</text>
<rect x="595.6" y="669.6" width="9.1" height="13.9" fill="#c0c0c0"/>
<path d="M596.1 683.5 V670.1 H604.7" fill="none" stroke="#ededed" stroke-width="1"/>
<path d="M595.6 683.3 H604.5 V669.6" fill="none" stroke="#7c7c7c" stroke-width="1"/>
<path d="M600.15 671.95 l3 3.3 h-6z M600.15 681.35 l3 -3.3 h-6z" fill="#111"/>
<path d="M616.400 688.700 L635.400 670.200" stroke="#3c58b4" stroke-width="2"/>
<path d="M636.9 687.7 v3.2 h-3.2 z" fill="#f8f8f8"/>
<path d="M637.6 689.3 v2.3 h-2.3 z" fill="#0a0a0a"/>
<text x="645" y="685.500" font-size="15.400" fill="#0a0a0a" stroke="#0a0a0a" stroke-width="0.400" textLength="18" lengthAdjust="spacingAndGlyphs">XY</text>
<path d="M665.5 687.7 v3.2 h-3.2 z" fill="#f8f8f8"/>
<path d="M666.2 689.3 v2.3 h-2.3 z" fill="#0a0a0a"/>
<rect x="672.35" y="670.5" width="1.3" height="10.2" fill="#46508c"/>
<rect x="678.6" y="666.400" width="25.500" height="25.900" fill="#ecd25e"/>
<circle cx="690.800" cy="679" r="10" fill="#f0c850" stroke="#d6b04a" stroke-width="0.800"/>
<path d="M684 679.700 H700.500 M686.500 677.300 V682 M689.500 677.300 V682 M692.500 677.300 V682 M695.500 677.300 V682 M698.500 677.300 V682" stroke="#7a5a10" stroke-width="1"/>
<rect x="693.800" y="682.500" width="9.700" height="9.500" fill="#f8f8f8" stroke="#222" stroke-width="1.100"/>
<path d="M695.800 687 l2.200 2.500 l3.600 -4.800" fill="none" stroke="#000" stroke-width="1.600"/>
<rect x="709.8" y="669.2" width="19.7" height="14.8" fill="#e2e2e2"/>
<path d="M710.25 684 V669.65 H729.5" fill="none" stroke="#161616" stroke-width="1.900"/>
<path d="M711.7 683.5 V671.1 H729" fill="none" stroke="#a4a4a4" stroke-width="0.900"/>
<path d="M709.8 684 H729.5 V669.2" fill="none" stroke="#f2f2f2" stroke-width="1"/>
<text x="714.6" y="680.7" font-size="11" fill="#000" textLength="9.5" lengthAdjust="spacingAndGlyphs"  stroke="#000" stroke-width="0.3">16</text>
<rect x="732.2" y="669.2" width="10.2" height="14.8" fill="#c0c0c0"/>
<path d="M732.7 684 V669.7 H742.4" fill="none" stroke="#ededed" stroke-width="1"/>
<path d="M732.2 683.8 H742.2 V669.2" fill="none" stroke="#7c7c7c" stroke-width="1"/>
<path d="M737.3 672 l3 3.3 h-6z M737.3 681.4 l3 -3.3 h-6z" fill="#111"/>
<rect x="80.400" y="700.300" width="20.300" height="18.200" fill="#f6f6f6" stroke="#111" stroke-width="1.300"/>
<path d="M80.400 709.400 H100.700 M90.500 700.300 V718.500" stroke="#111" stroke-width="1.100"/>
<circle cx="90.500" cy="709.400" r="4.300" fill="#f6f6f6" stroke="#111" stroke-width="1.200"/>
<rect x="108.35" y="700.4" width="1.3" height="10.4" fill="#4e5566"/>
<text x="116.4" y="709.9" font-size="11" fill="#0a0a0a" textLength="10.1" lengthAdjust="spacingAndGlyphs"  stroke="#0a0a0a" stroke-width="0.3">U:</text>
<rect x="132" y="698.7" width="28.5" height="15.3" fill="#e2e2e2"/>
<path d="M132.45 714 V699.15 H160.5" fill="none" stroke="#161616" stroke-width="1.900"/>
<path d="M133.9 713.5 V700.6 H160" fill="none" stroke="#a4a4a4" stroke-width="0.900"/>
<path d="M132 714 H160.5 V698.7" fill="none" stroke="#f2f2f2" stroke-width="1"/>
<rect x="162" y="698.7" width="10" height="15.3" fill="#c0c0c0"/>
<path d="M162.5 714 V699.2 H172" fill="none" stroke="#ededed" stroke-width="1"/>
<path d="M162 713.8 H171.8 V698.7" fill="none" stroke="#7c7c7c" stroke-width="1"/>
<path d="M167 701.75 l3 3.3 h-6z M167 711.15 l3 -3.3 h-6z" fill="#111"/>
<text x="178.8" y="709.9" font-size="11" fill="#0a0a0a" textLength="9.2" lengthAdjust="spacingAndGlyphs"  stroke="#0a0a0a" stroke-width="0.3">V:</text>
<rect x="197.1" y="698.7" width="28.5" height="15.3" fill="#e2e2e2"/>
<path d="M197.55 714 V699.15 H225.6" fill="none" stroke="#161616" stroke-width="1.900"/>
<path d="M199 713.5 V700.6 H225.1" fill="none" stroke="#a4a4a4" stroke-width="0.900"/>
<path d="M197.1 714 H225.6 V698.7" fill="none" stroke="#f2f2f2" stroke-width="1"/>
<rect x="227" y="698.7" width="10.8" height="15.3" fill="#c0c0c0"/>
<path d="M227.5 714 V699.2 H237.8" fill="none" stroke="#ededed" stroke-width="1"/>
<path d="M227 713.8 H237.6 V698.7" fill="none" stroke="#7c7c7c" stroke-width="1"/>
<path d="M232.4 701.75 l3 3.3 h-6z M232.4 711.15 l3 -3.3 h-6z" fill="#111"/>
<text x="243.9" y="709.9" font-size="11" fill="#0a0a0a" textLength="12.8" lengthAdjust="spacingAndGlyphs"  stroke="#0a0a0a" stroke-width="0.3">W:</text>
<rect x="262.2" y="698.7" width="28.5" height="15.3" fill="#e2e2e2"/>
<path d="M262.65 714 V699.15 H290.7" fill="none" stroke="#161616" stroke-width="1.900"/>
<path d="M264.1 713.5 V700.6 H290.2" fill="none" stroke="#a4a4a4" stroke-width="0.900"/>
<path d="M262.2 714 H290.7 V698.7" fill="none" stroke="#f2f2f2" stroke-width="1"/>
<rect x="292.7" y="698.7" width="10.2" height="15.3" fill="#c0c0c0"/>
<path d="M293.2 714 V699.2 H302.9" fill="none" stroke="#ededed" stroke-width="1"/>
<path d="M292.7 713.8 H302.7 V698.7" fill="none" stroke="#7c7c7c" stroke-width="1"/>
<path d="M297.8 701.75 l3 3.3 h-6z M297.8 711.15 l3 -3.3 h-6z" fill="#111"/>
<rect x="313.95" y="700.8" width="1.3" height="10.2" fill="#4e5566"/>
<path d="M351.300 708.500 V704.800 A3.700 3.700 0 0 1 358.700 704.800 V708.500" fill="none" stroke="#55573a" stroke-width="3.400"/>
<path d="M351.300 708.500 V704.800 A3.700 3.700 0 0 1 358.700 704.800 V708.500" fill="none" stroke="#9c9e72" stroke-width="1.600"/>
<rect x="348.500" y="707.600" width="13" height="11.300" rx="1.300" fill="#5e6040" stroke="#38391f" stroke-width="0.900"/>
<rect x="349.600" y="708.700" width="10.800" height="2.200" fill="#8c8f62"/>
<rect x="349.600" y="712.600" width="10.800" height="1.300" fill="#7a7c54"/>
<rect x="349.600" y="715.400" width="10.800" height="1.300" fill="#70724c"/>
<rect x="354.200" y="711.200" width="1.800" height="4.200" fill="#26270f"/>
<path d="M373.300 710.500 L393.500 699.500 L388.500 718.500z" fill="#e6b4b8" stroke="#b86a78" stroke-width="1"/>
<path d="M387.500 712.500 a3.600 3.600 0 1 1 5.600 0 l-0.800 2 h-4z" fill="#f8f8f8" stroke="#555" stroke-width="0.800"/>
<rect x="388.600" y="716.500" width="3.400" height="2.600" fill="#777"/>
<rect x="401.15" y="700.8" width="1.3" height="10.2" fill="#4e5566"/>
<defs><radialGradient id="bulb" cx="0.400" cy="0.350" r="0.700"><stop offset="0" stop-color="#ffffff"/><stop offset="1" stop-color="#a9a9a9"/></radialGradient></defs>
<path d="M416.700 711 a5.200 5.200 0 1 1 6.600 0 l-0.900 3.200 h-4.800z" fill="url(#bulb)" stroke="#3a3a3a" stroke-width="1"/>
<rect x="417.900" y="714.200" width="4.200" height="3.400" rx="0.800" fill="#3c3c3c"/>
<path d="M431.7 717.1 v3.2 h-3.2 z" fill="#f8f8f8"/>
<path d="M432.4 718.7 v2.3 h-2.3 z" fill="#0a0a0a"/>
<g stroke="#2d5f88" stroke-width="2.3" fill="none" stroke-linecap="round">
<path d="M448.5 709.4 L456.21 713.85"/>
<path d="M453.26 712.15 L456.27 711.06"/>
<path d="M453.26 712.15 L453.82 715.3"/>
<path d="M448.5 709.4 L448.5 718.3"/>
<path d="M448.5 714.9 L450.95 716.96"/>
<path d="M448.5 714.9 L446.05 716.96"/>
<path d="M448.5 709.4 L440.79 713.85"/>
<path d="M443.74 712.15 L443.18 715.3"/>
<path d="M443.74 712.15 L440.73 711.06"/>
<path d="M448.5 709.4 L440.79 704.95"/>
<path d="M443.74 706.65 L440.73 707.74"/>
<path d="M443.74 706.65 L443.18 703.5"/>
<path d="M448.5 709.4 L448.5 700.5"/>
<path d="M448.5 703.9 L446.05 701.84"/>
<path d="M448.5 703.9 L450.95 701.84"/>
<path d="M448.5 709.4 L456.21 704.95"/>
<path d="M453.26 706.65 L453.82 703.5"/>
<path d="M453.26 706.65 L456.27 707.74"/>
</g>
<g stroke="#d9ecf8" stroke-width="0.8" fill="none" stroke-linecap="round">
<path d="M448.5 709.4 L456.21 713.85"/>
<path d="M453.26 712.15 L456.27 711.06"/>
<path d="M453.26 712.15 L453.82 715.3"/>
<path d="M448.5 709.4 L448.5 718.3"/>
<path d="M448.5 714.9 L450.95 716.96"/>
<path d="M448.5 714.9 L446.05 716.96"/>
<path d="M448.5 709.4 L440.79 713.85"/>
<path d="M443.74 712.15 L443.18 715.3"/>
<path d="M443.74 712.15 L440.73 711.06"/>
<path d="M448.5 709.4 L440.79 704.95"/>
<path d="M443.74 706.65 L440.73 707.74"/>
<path d="M443.74 706.65 L443.18 703.5"/>
<path d="M448.5 709.4 L448.5 700.5"/>
<path d="M448.5 703.9 L446.05 701.84"/>
<path d="M448.5 703.9 L450.95 701.84"/>
<path d="M448.5 709.4 L456.21 704.95"/>
<path d="M453.26 706.65 L453.82 703.5"/>
<path d="M453.26 706.65 L456.27 707.74"/>
</g>
<circle cx="448.500" cy="709.400" r="1.700" fill="#eef6fc" stroke="#2d5f88" stroke-width="0.800"/>
<path d="M459.9 717.1 v3.2 h-3.2 z" fill="#f8f8f8"/>
<path d="M460.6 718.7 v2.3 h-2.3 z" fill="#0a0a0a"/>
<rect x="466.45" y="700.8" width="1.3" height="10.2" fill="#4e5566"/>
<rect x="472.5" y="696.7" width="136.7" height="20.3" fill="#dedede"/>
<path d="M472.95 717 V697.15 H609.2" fill="none" stroke="#161616" stroke-width="1.900"/>
<path d="M474.4 716.5 V698.6 H608.7" fill="none" stroke="#a4a4a4" stroke-width="0.900"/>
<path d="M472.5 717 H609.2 V696.7" fill="none" stroke="#f2f2f2" stroke-width="1"/>
<text x="476.2" y="710.9" font-size="11" fill="#0a0a0a" textLength="28.9" lengthAdjust="spacingAndGlyphs"  stroke="#0a0a0a" stroke-width="0.3">All IDs</text>
<path d="M597.600 704.800 l3.700 3.700 l3.700 -3.700" fill="none" stroke="#333" stroke-width="1.100"/>
<g transform="translate(624.500 0) scale(1.130 1) translate(-624.500 0)">
<path d="M619.300 719.600 l-0.500 -3.200 l-4.800 -5.600 q-1.200 -2 0.300 -2.700 q1.500 -0.500 2.900 1.300 l1.900 2.200 l-1.500 -9.600 q-0.100 -1.500 1.100 -1.700 q1.200 -0.100 1.600 1.300 l1.500 6.200 l-0.500 -8.600 q0.100 -1.400 1.400 -1.400 q1.200 0 1.400 1.400 l0.900 8.400 l1 -7.600 q0.300 -1.300 1.500 -1.100 q1.100 0.200 1.100 1.500 l-0.300 8.200 l2.100 -5.300 q0.600 -1.100 1.600 -0.700 q0.900 0.500 0.600 1.700 l-2 7.800 q-0.200 3.400 -2.200 5.600 l-0.400 1.900z" fill="#fbfbfb" stroke="#1c1c1c" stroke-width="0.950" stroke-linejoin="round"/>
</g>
<circle cx="648.900" cy="706.400" r="6.100" fill="#e4e4e4" stroke="#3c3c3c" stroke-width="1.600"/>
<path d="M653.500 711 L659.600 716.800" stroke="#2c2c2c" stroke-width="2.800" stroke-linecap="round"/>
<path d="M659.300 701.500 H664 M661.700 699.200 V703.800 M659.300 706 H664" stroke="#222" stroke-width="1"/>
<rect x="669" y="698.500" width="21.200" height="21" fill="none" stroke="#222" stroke-width="1.200" stroke-dasharray="2 1.800"/>
<circle cx="678.400" cy="706.500" r="5.400" fill="#e6e6f0" stroke="#2c2c3c" stroke-width="1.500"/>
<path d="M682.400 710.600 L686.600 715.400" stroke="#26267c" stroke-width="2.400" stroke-linecap="round"/>
<path d="M697.400 704.800 L706.600 700.600 L715.800 704.400 V714.600 L705.600 719 L697.400 714.600z" fill="#f8f8f8" stroke="#7e7e7e" stroke-width="0.800"/>
<path d="M697.400 704.800 L705.600 708.800 V719 L697.400 714.600z" fill="#8e8e8e"/>
<path d="M705.600 708.800 L715.800 704.400 V714.600 L705.600 719z" fill="#d8d8d8"/>
<path d="M696 701.400 v-2.800 h2.800z M718.200 701.400 v-2.800 h-2.800z M696 717.800 v2.800 h2.800z" fill="#222"/>
<path d="M718.9 717.1 v3.2 h-3.2 z" fill="#f8f8f8"/>
<path d="M719.6 718.7 v2.3 h-2.3 z" fill="#0a0a0a"/>
<rect x="726.100" y="699.500" width="18.800" height="18.400" fill="#5c5c5c"/>
<rect x="727.1" y="700.4" width="1.900" height="1.900" fill="#f1f3f1"/>
<rect x="730.14" y="700.4" width="1.900" height="1.900" fill="#f1f3f1"/>
<rect x="733.18" y="700.4" width="1.900" height="1.900" fill="#f1f3f1"/>
<rect x="736.22" y="700.4" width="1.900" height="1.900" fill="#f1f3f1"/>
<rect x="739.26" y="700.4" width="1.900" height="1.900" fill="#f1f3f1"/>
<rect x="742.3" y="700.4" width="1.900" height="1.900" fill="#f1f3f1"/>
<rect x="727.1" y="703.4" width="1.900" height="1.900" fill="#f1f3f1"/>
<rect x="730.14" y="703.4" width="1.900" height="1.900" fill="#f1f3f1"/>
<rect x="733.18" y="703.4" width="1.900" height="1.900" fill="#f1f3f1"/>
<rect x="736.22" y="703.4" width="1.900" height="1.900" fill="#f1f3f1"/>
<rect x="739.26" y="703.4" width="1.900" height="1.900" fill="#f1f3f1"/>
<rect x="742.3" y="703.4" width="1.900" height="1.900" fill="#f1f3f1"/>
<rect x="727.1" y="706.4" width="1.900" height="1.900" fill="#f1f3f1"/>
<rect x="730.14" y="706.4" width="1.900" height="1.900" fill="#f1f3f1"/>
<rect x="733.18" y="706.4" width="1.900" height="1.900" fill="#f1f3f1"/>
<rect x="736.22" y="706.4" width="1.900" height="1.900" fill="#f1f3f1"/>
<rect x="739.26" y="706.4" width="1.900" height="1.900" fill="#f1f3f1"/>
<rect x="742.3" y="706.4" width="1.900" height="1.900" fill="#f1f3f1"/>
<rect x="727.1" y="709.4" width="1.900" height="1.900" fill="#f1f3f1"/>
<rect x="730.14" y="709.4" width="1.900" height="1.900" fill="#f1f3f1"/>
<rect x="733.18" y="709.4" width="1.900" height="1.900" fill="#f1f3f1"/>
<rect x="736.22" y="709.4" width="1.900" height="1.900" fill="#f1f3f1"/>
<rect x="739.26" y="709.4" width="1.900" height="1.900" fill="#f1f3f1"/>
<rect x="742.3" y="709.4" width="1.900" height="1.900" fill="#f1f3f1"/>
<rect x="727.1" y="712.4" width="1.900" height="1.900" fill="#f1f3f1"/>
<rect x="730.14" y="712.4" width="1.900" height="1.900" fill="#f1f3f1"/>
<rect x="733.18" y="712.4" width="1.900" height="1.900" fill="#f1f3f1"/>
<rect x="736.22" y="712.4" width="1.900" height="1.900" fill="#f1f3f1"/>
<rect x="739.26" y="712.4" width="1.900" height="1.900" fill="#f1f3f1"/>
<rect x="742.3" y="712.4" width="1.900" height="1.900" fill="#f1f3f1"/>
<rect x="727.1" y="715.4" width="1.900" height="1.900" fill="#f1f3f1"/>
<rect x="730.14" y="715.4" width="1.900" height="1.900" fill="#f1f3f1"/>
<rect x="733.18" y="715.4" width="1.900" height="1.900" fill="#f1f3f1"/>
<rect x="736.22" y="715.4" width="1.900" height="1.900" fill="#f1f3f1"/>
<rect x="739.26" y="715.4" width="1.900" height="1.900" fill="#f1f3f1"/>
<rect x="742.3" y="715.4" width="1.900" height="1.900" fill="#f1f3f1"/>
<path d="M735.600 718.200 V711.800 A4.800 4.800 0 0 1 745.200 711.800 V718.200 H742.300 V712 A1.900 1.900 0 0 0 738.500 712 V718.200z" fill="#f08a98" stroke="#c4182c" stroke-width="1"/>
<rect x="736" y="715.600" width="2.200" height="2.600" fill="#fafafa"/><rect x="742.600" y="715.600" width="2.200" height="2.600" fill="#fafafa"/>
<path d="M747.1 717.1 v3.2 h-3.2 z" fill="#f8f8f8"/>
<path d="M747.8 718.7 v2.3 h-2.3 z" fill="#0a0a0a"/>
</g>
<g id="annotations">
<line x1="552.6" y1="253.3" x2="632" y2="190.05" stroke="#f01414" stroke-width="3.2" stroke-linecap="round"/>
<polygon points="640.6,183.2 634.64,194.98 627.79,186.37" fill="#f01414"/>
<path d="M503.800 232.600 Q518 231.800 532.200 233.900 Q531 246 527.900 257 Q526 266 525 271.400" fill="none" stroke="#f01414" stroke-width="3" stroke-linecap="round" stroke-linejoin="round"/>
<path d="M511.700 257.600 Q526 257 540 257.600" fill="none" stroke="#f01414" stroke-width="3" stroke-linecap="round"/>
<line x1="249.2" y1="773.6" x2="343.67" y2="696.74" stroke="#f01414" stroke-width="3.2" stroke-linecap="round"/>
<polygon points="352.2,689.8 346.36,701.64 339.42,693.11" fill="#f01414"/>
<path d="M229.800 759.500 Q219 758.500 214.500 762.500 Q212 774 212.400 786.500 Q213.500 791.500 218 792 Q228 793.200 238 792.600 Q239.600 789 238.600 785.200 Q235 783 229.800 783.300 Q222 783.600 215.600 785" fill="none" stroke="#f01414" stroke-width="2.700" stroke-linecap="round" stroke-linejoin="round"/>
<text x="556.3" y="281.4" font-size="12" fill="#f01414" textLength="435.5" lengthAdjust="spacingAndGlyphs" fill-opacity="0.880">ЗАЖАВ ЭТОТ ЗНАЧОК ВЫБЕРЕШЬ ВТОРОЙ ВАРИАНТ РАСКЛАДКИ</text>
<text x="555.3" y="299.7" font-size="12" fill="#f01414" textLength="303.3" lengthAdjust="spacingAndGlyphs" fill-opacity="0.880">И ВЫРАВНЯЕШЬ ВСЕ ВЕРТИКАЛЬНЫЕ ЛИНИИ</text>
<text x="136.7" y="817.9" font-size="12.5" fill="#f01414" textLength="131.8" lengthAdjust="spacingAndGlyphs" fill-opacity="0.880">ВЫДЕЛИ ВСЕ РЕБРА</text>
</g>
</svg>
</body>
</html>
